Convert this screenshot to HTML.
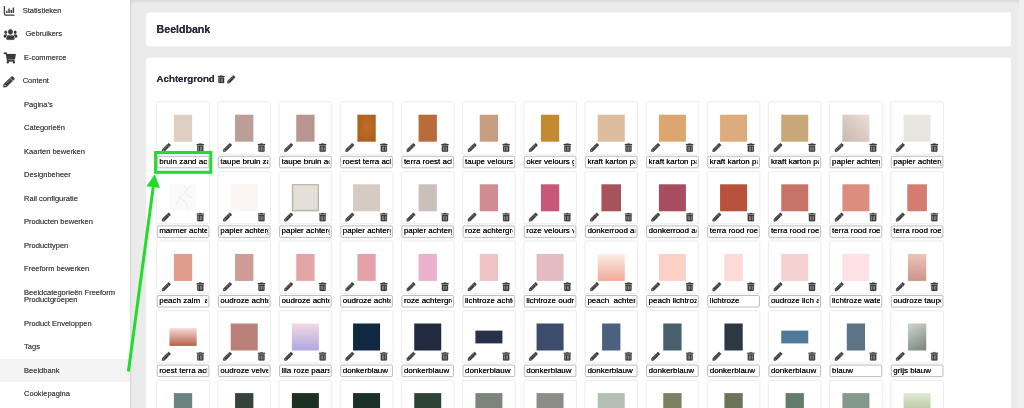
<!DOCTYPE html>
<html lang="nl"><head><meta charset="utf-8"><title>Beeldbank</title>
<style>
html,body{margin:0;padding:0}
body{width:1024px;height:408px;overflow:hidden;position:relative;background:#ebebeb;font-family:"Liberation Sans",sans-serif;}
.abs,.inp,.nav,.panel{position:absolute}
.topshade{left:0;top:0;width:1024px;height:4px;background:linear-gradient(#d9d9d9,#ebebeb)}
.scroll{left:1019px;top:0;width:5px;height:408px;background:#efefef}
.side{left:0;top:0;width:129.5px;height:408px;background:#fff;box-shadow:1px 0 2px rgba(0,0,0,.10)}
.nav{font-size:7.5px;line-height:7.5px;color:#4f4f4f;white-space:nowrap}
.active{left:0;top:358.5px;width:129.5px;height:23.5px;background:#f3f3f3}
.panel{background:#fff;border-radius:2px}
.h1{font-weight:bold;font-size:10.6px;line-height:12px;color:#2b2b3f;white-space:nowrap}
.h2{font-weight:bold;font-size:9.7px;line-height:11px;color:#2b2b3f;white-space:nowrap}
.inp{width:60px;height:10.2px;font-size:8px;line-height:10.2px;color:#111;white-space:pre;overflow:hidden;clip-path:inset(0 12.1px 0 0)}
.txt{text-shadow:0 0 .45px currentColor;position:absolute;left:0;top:0;width:1024px;height:408px;will-change:transform}
</style></head><body>
<div class="abs topshade"></div>
<div class="abs scroll"></div>

<svg class="abs" style="left:0;top:0" width="1024" height="408" viewBox="0 0 1024 408"><rect x="146.2" y="12.5" width="864.7" height="33.8" rx="2" fill="#fff"/><rect x="146.2" y="57.7" width="864.7" height="360" rx="2" fill="#fff"/></svg>
<div class="abs side"></div><div class="abs active"></div>
<svg class="abs" style="left:0;top:0" width="1024" height="408" viewBox="0 0 1024 408"><defs><radialGradient id="g1" cx="0.5" cy="0.45" r="0.72"><stop offset="0.0" stop-color="#bf6f28"/><stop offset="1.0" stop-color="#a95b1c"/></radialGradient><linearGradient id="g2" x1="1" y1="0" x2="0" y2="1"><stop offset="0" stop-color="#eadfd8"/><stop offset="1" stop-color="#c8b7ae"/></linearGradient><linearGradient id="g3" x1="0" y1="0" x2="0" y2="1"><stop offset="0" stop-color="#fdeee8"/><stop offset="1" stop-color="#f0a898"/></linearGradient><linearGradient id="g4" x1="0" y1="0" x2="0" y2="1"><stop offset="0" stop-color="#ecc4bc"/><stop offset="1" stop-color="#cc9488"/></linearGradient><linearGradient id="g5" x1="0" y1="0" x2="0" y2="1"><stop offset="0" stop-color="#f6dcd8"/><stop offset="1" stop-color="#b86048"/></linearGradient><linearGradient id="g6" x1="0" y1="0" x2="0" y2="1"><stop offset="0" stop-color="#f4d8e0"/><stop offset="1" stop-color="#b0a8e4"/></linearGradient><linearGradient id="g7" x1="0.3" y1="0" x2="0.7" y2="1"><stop offset="0" stop-color="#c8d0c8"/><stop offset="1" stop-color="#808884"/></linearGradient><linearGradient id="g8" x1="0" y1="0" x2="0" y2="1"><stop offset="0" stop-color="#e0e8d4"/><stop offset="1" stop-color="#a0b884"/></linearGradient></defs>
<rect x="156.70" y="101.80" width="52.70" height="52.40" rx="1.3" fill="#fff" stroke="#e4e4e4" stroke-width="0.7"/>
<rect x="173.90" y="114.70" width="18.3" height="27" fill="#dfcfc2"/>
<path transform="translate(162.10 143.40) scale(0.01621 0.01621)" fill="#3c3c3c" stroke="#3c3c3c" stroke-width="34" stroke-linejoin="round" d="M497.9 142.1l-46.1 46.1c-4.7 4.7-12.3 4.7-17 0l-111-111c-4.7-4.7-4.7-12.3 0-17l46.1-46.1c18.700-18.700 49.100-18.700 67.900 0l60.100 60.100c18.800 18.700 18.800 49.100 0 67.900zM284.200 99.800L21.600 362.400.400 483.900c-2.900 16.400 11.400 30.600 27.800 27.800l121.500-21.300 262.600-262.600c4.700-4.700 4.700-12.300 0-17l-111-111c-4.800-4.700-12.400-4.700-17.100 0zM124.100 339.900c-5.500-5.500-5.500-14.300 0-19.800l154-154c5.500-5.500 14.300-5.500 19.800 0s5.500 14.300 0 19.800l-154 154c-5.500 5.500-14.300 5.500-19.800 0zM88 424h48v36.300l-64.500 11.300-31.100-31.100L51.700 376H88v48z"/>
<path transform="translate(196.70 143.40) scale(0.01607 0.01621)" fill="#3c3c3c" stroke="#3c3c3c" stroke-width="14" stroke-linejoin="round" d="M32 464a48 48 0 0 0 48 48h288a48 48 0 0 0 48-48V128H32zm272-256a16 16 0 0 1 32 0v224a16 16 0 0 1-32 0zm-96 0a16 16 0 0 1 32 0v224a16 16 0 0 1-32 0zm-96 0a16 16 0 0 1 32 0v224a16 16 0 0 1-32 0zM432 32H312l-9.400-18.700A24 24 0 0 0 281.100 0H166.800a23.720 23.720 0 0 0-21.400 13.300L136 32H16A16 16 0 0 0 0 48v32a16 16 0 0 0 16 16h416a16 16 0 0 0 16-16V48a16 16 0 0 0-16-16z"/>
<rect x="157.20" y="156.30" width="51.7" height="11.5" rx="1.1" fill="#fff" stroke="#939393" stroke-width="0.62"/>
<rect x="217.87" y="101.80" width="52.70" height="52.40" rx="1.3" fill="#fff" stroke="#e4e4e4" stroke-width="0.7"/>
<rect x="235.07" y="114.70" width="18.3" height="27" fill="#bd9d97"/>
<path transform="translate(223.27 143.40) scale(0.01621 0.01621)" fill="#3c3c3c" stroke="#3c3c3c" stroke-width="34" stroke-linejoin="round" d="M497.9 142.1l-46.1 46.1c-4.7 4.7-12.3 4.7-17 0l-111-111c-4.7-4.7-4.7-12.3 0-17l46.1-46.1c18.700-18.700 49.100-18.700 67.900 0l60.100 60.100c18.800 18.700 18.800 49.100 0 67.900zM284.200 99.800L21.600 362.400.400 483.900c-2.900 16.400 11.400 30.600 27.800 27.800l121.500-21.300 262.600-262.600c4.700-4.700 4.700-12.300 0-17l-111-111c-4.800-4.700-12.400-4.700-17.100 0zM124.100 339.900c-5.500-5.500-5.500-14.300 0-19.800l154-154c5.500-5.500 14.300-5.500 19.800 0s5.500 14.300 0 19.800l-154 154c-5.500 5.500-14.300 5.500-19.800 0zM88 424h48v36.300l-64.500 11.300-31.100-31.100L51.700 376H88v48z"/>
<path transform="translate(257.87 143.40) scale(0.01607 0.01621)" fill="#3c3c3c" stroke="#3c3c3c" stroke-width="14" stroke-linejoin="round" d="M32 464a48 48 0 0 0 48 48h288a48 48 0 0 0 48-48V128H32zm272-256a16 16 0 0 1 32 0v224a16 16 0 0 1-32 0zm-96 0a16 16 0 0 1 32 0v224a16 16 0 0 1-32 0zm-96 0a16 16 0 0 1 32 0v224a16 16 0 0 1-32 0zM432 32H312l-9.400-18.700A24 24 0 0 0 281.100 0H166.800a23.720 23.720 0 0 0-21.400 13.300L136 32H16A16 16 0 0 0 0 48v32a16 16 0 0 0 16 16h416a16 16 0 0 0 16-16V48a16 16 0 0 0-16-16z"/>
<rect x="218.37" y="156.30" width="51.7" height="11.5" rx="1.1" fill="#fff" stroke="#939393" stroke-width="0.62"/>
<rect x="279.04" y="101.80" width="52.70" height="52.40" rx="1.3" fill="#fff" stroke="#e4e4e4" stroke-width="0.7"/>
<rect x="296.24" y="114.70" width="18.3" height="27" fill="#b8958f"/>
<path transform="translate(284.44 143.40) scale(0.01621 0.01621)" fill="#3c3c3c" stroke="#3c3c3c" stroke-width="34" stroke-linejoin="round" d="M497.9 142.1l-46.1 46.1c-4.7 4.7-12.3 4.7-17 0l-111-111c-4.7-4.7-4.7-12.3 0-17l46.1-46.1c18.700-18.700 49.100-18.700 67.900 0l60.100 60.100c18.800 18.700 18.800 49.100 0 67.900zM284.200 99.800L21.600 362.400.400 483.900c-2.900 16.400 11.400 30.600 27.800 27.800l121.500-21.300 262.600-262.600c4.700-4.700 4.700-12.300 0-17l-111-111c-4.800-4.700-12.400-4.700-17.100 0zM124.100 339.900c-5.500-5.500-5.500-14.300 0-19.800l154-154c5.500-5.500 14.300-5.500 19.800 0s5.500 14.300 0 19.800l-154 154c-5.500 5.500-14.300 5.500-19.800 0zM88 424h48v36.300l-64.500 11.300-31.100-31.100L51.700 376H88v48z"/>
<path transform="translate(319.04 143.40) scale(0.01607 0.01621)" fill="#3c3c3c" stroke="#3c3c3c" stroke-width="14" stroke-linejoin="round" d="M32 464a48 48 0 0 0 48 48h288a48 48 0 0 0 48-48V128H32zm272-256a16 16 0 0 1 32 0v224a16 16 0 0 1-32 0zm-96 0a16 16 0 0 1 32 0v224a16 16 0 0 1-32 0zm-96 0a16 16 0 0 1 32 0v224a16 16 0 0 1-32 0zM432 32H312l-9.400-18.700A24 24 0 0 0 281.100 0H166.800a23.720 23.720 0 0 0-21.400 13.300L136 32H16A16 16 0 0 0 0 48v32a16 16 0 0 0 16 16h416a16 16 0 0 0 16-16V48a16 16 0 0 0-16-16z"/>
<rect x="279.54" y="156.30" width="51.7" height="11.5" rx="1.1" fill="#fff" stroke="#939393" stroke-width="0.62"/>
<rect x="340.21" y="101.80" width="52.70" height="52.40" rx="1.3" fill="#fff" stroke="#e4e4e4" stroke-width="0.7"/>
<rect x="357.41" y="114.70" width="18.3" height="27" fill="url(#g1)"/>
<path transform="translate(345.61 143.40) scale(0.01621 0.01621)" fill="#3c3c3c" stroke="#3c3c3c" stroke-width="34" stroke-linejoin="round" d="M497.9 142.1l-46.1 46.1c-4.7 4.7-12.3 4.7-17 0l-111-111c-4.7-4.7-4.7-12.3 0-17l46.1-46.1c18.700-18.700 49.100-18.700 67.900 0l60.100 60.100c18.800 18.700 18.800 49.100 0 67.900zM284.200 99.800L21.600 362.400.400 483.900c-2.900 16.400 11.400 30.600 27.800 27.800l121.500-21.300 262.600-262.600c4.700-4.700 4.700-12.300 0-17l-111-111c-4.800-4.700-12.400-4.700-17.100 0zM124.100 339.900c-5.500-5.500-5.500-14.300 0-19.800l154-154c5.500-5.500 14.300-5.500 19.800 0s5.500 14.300 0 19.800l-154 154c-5.500 5.500-14.300 5.500-19.800 0zM88 424h48v36.300l-64.500 11.300-31.100-31.100L51.700 376H88v48z"/>
<path transform="translate(380.21 143.40) scale(0.01607 0.01621)" fill="#3c3c3c" stroke="#3c3c3c" stroke-width="14" stroke-linejoin="round" d="M32 464a48 48 0 0 0 48 48h288a48 48 0 0 0 48-48V128H32zm272-256a16 16 0 0 1 32 0v224a16 16 0 0 1-32 0zm-96 0a16 16 0 0 1 32 0v224a16 16 0 0 1-32 0zm-96 0a16 16 0 0 1 32 0v224a16 16 0 0 1-32 0zM432 32H312l-9.400-18.700A24 24 0 0 0 281.100 0H166.800a23.720 23.720 0 0 0-21.400 13.300L136 32H16A16 16 0 0 0 0 48v32a16 16 0 0 0 16 16h416a16 16 0 0 0 16-16V48a16 16 0 0 0-16-16z"/>
<rect x="340.71" y="156.30" width="51.7" height="11.5" rx="1.1" fill="#fff" stroke="#939393" stroke-width="0.62"/>
<rect x="401.38" y="101.80" width="52.70" height="52.40" rx="1.3" fill="#fff" stroke="#e4e4e4" stroke-width="0.7"/>
<rect x="418.58" y="114.70" width="18.3" height="27" fill="#b96b3a"/>
<path transform="translate(406.78 143.40) scale(0.01621 0.01621)" fill="#3c3c3c" stroke="#3c3c3c" stroke-width="34" stroke-linejoin="round" d="M497.9 142.1l-46.1 46.1c-4.7 4.7-12.3 4.7-17 0l-111-111c-4.7-4.7-4.7-12.3 0-17l46.1-46.1c18.700-18.700 49.100-18.700 67.900 0l60.100 60.100c18.800 18.700 18.800 49.100 0 67.900zM284.200 99.800L21.600 362.400.400 483.900c-2.900 16.400 11.400 30.600 27.800 27.800l121.500-21.300 262.600-262.600c4.700-4.700 4.700-12.300 0-17l-111-111c-4.800-4.700-12.400-4.700-17.100 0zM124.100 339.900c-5.500-5.500-5.500-14.300 0-19.800l154-154c5.500-5.500 14.300-5.500 19.800 0s5.500 14.300 0 19.800l-154 154c-5.500 5.500-14.300 5.500-19.800 0zM88 424h48v36.300l-64.500 11.300-31.100-31.100L51.700 376H88v48z"/>
<path transform="translate(441.38 143.40) scale(0.01607 0.01621)" fill="#3c3c3c" stroke="#3c3c3c" stroke-width="14" stroke-linejoin="round" d="M32 464a48 48 0 0 0 48 48h288a48 48 0 0 0 48-48V128H32zm272-256a16 16 0 0 1 32 0v224a16 16 0 0 1-32 0zm-96 0a16 16 0 0 1 32 0v224a16 16 0 0 1-32 0zm-96 0a16 16 0 0 1 32 0v224a16 16 0 0 1-32 0zM432 32H312l-9.400-18.700A24 24 0 0 0 281.100 0H166.800a23.720 23.720 0 0 0-21.400 13.300L136 32H16A16 16 0 0 0 0 48v32a16 16 0 0 0 16 16h416a16 16 0 0 0 16-16V48a16 16 0 0 0-16-16z"/>
<rect x="401.88" y="156.30" width="51.7" height="11.5" rx="1.1" fill="#fff" stroke="#939393" stroke-width="0.62"/>
<rect x="462.55" y="101.80" width="52.70" height="52.40" rx="1.3" fill="#fff" stroke="#e4e4e4" stroke-width="0.7"/>
<rect x="479.75" y="114.70" width="18.3" height="27" fill="#c89e80"/>
<path transform="translate(467.95 143.40) scale(0.01621 0.01621)" fill="#3c3c3c" stroke="#3c3c3c" stroke-width="34" stroke-linejoin="round" d="M497.9 142.1l-46.1 46.1c-4.7 4.7-12.3 4.7-17 0l-111-111c-4.7-4.7-4.7-12.3 0-17l46.1-46.1c18.700-18.700 49.100-18.700 67.900 0l60.100 60.100c18.800 18.700 18.800 49.100 0 67.900zM284.200 99.800L21.600 362.400.400 483.900c-2.900 16.400 11.400 30.600 27.800 27.800l121.500-21.300 262.600-262.600c4.700-4.700 4.700-12.300 0-17l-111-111c-4.800-4.700-12.400-4.700-17.100 0zM124.100 339.900c-5.500-5.500-5.500-14.300 0-19.800l154-154c5.500-5.500 14.300-5.500 19.800 0s5.500 14.300 0 19.800l-154 154c-5.500 5.500-14.300 5.500-19.800 0zM88 424h48v36.300l-64.500 11.300-31.100-31.100L51.700 376H88v48z"/>
<path transform="translate(502.55 143.40) scale(0.01607 0.01621)" fill="#3c3c3c" stroke="#3c3c3c" stroke-width="14" stroke-linejoin="round" d="M32 464a48 48 0 0 0 48 48h288a48 48 0 0 0 48-48V128H32zm272-256a16 16 0 0 1 32 0v224a16 16 0 0 1-32 0zm-96 0a16 16 0 0 1 32 0v224a16 16 0 0 1-32 0zm-96 0a16 16 0 0 1 32 0v224a16 16 0 0 1-32 0zM432 32H312l-9.400-18.700A24 24 0 0 0 281.100 0H166.800a23.720 23.720 0 0 0-21.400 13.300L136 32H16A16 16 0 0 0 0 48v32a16 16 0 0 0 16 16h416a16 16 0 0 0 16-16V48a16 16 0 0 0-16-16z"/>
<rect x="463.05" y="156.30" width="51.7" height="11.5" rx="1.1" fill="#fff" stroke="#939393" stroke-width="0.62"/>
<rect x="523.72" y="101.80" width="52.70" height="52.40" rx="1.3" fill="#fff" stroke="#e4e4e4" stroke-width="0.7"/>
<rect x="540.92" y="114.70" width="18.3" height="27" fill="#c48a30"/>
<path transform="translate(529.12 143.40) scale(0.01621 0.01621)" fill="#3c3c3c" stroke="#3c3c3c" stroke-width="34" stroke-linejoin="round" d="M497.9 142.1l-46.1 46.1c-4.7 4.7-12.3 4.7-17 0l-111-111c-4.7-4.7-4.7-12.3 0-17l46.1-46.1c18.700-18.700 49.100-18.700 67.900 0l60.100 60.100c18.800 18.700 18.800 49.100 0 67.900zM284.200 99.800L21.600 362.400.400 483.900c-2.900 16.400 11.400 30.600 27.800 27.800l121.500-21.300 262.600-262.600c4.700-4.700 4.700-12.300 0-17l-111-111c-4.800-4.700-12.400-4.700-17.100 0zM124.100 339.900c-5.500-5.500-5.500-14.300 0-19.800l154-154c5.500-5.500 14.300-5.500 19.800 0s5.500 14.300 0 19.800l-154 154c-5.500 5.500-14.300 5.500-19.800 0zM88 424h48v36.300l-64.500 11.300-31.100-31.100L51.700 376H88v48z"/>
<path transform="translate(563.72 143.40) scale(0.01607 0.01621)" fill="#3c3c3c" stroke="#3c3c3c" stroke-width="14" stroke-linejoin="round" d="M32 464a48 48 0 0 0 48 48h288a48 48 0 0 0 48-48V128H32zm272-256a16 16 0 0 1 32 0v224a16 16 0 0 1-32 0zm-96 0a16 16 0 0 1 32 0v224a16 16 0 0 1-32 0zm-96 0a16 16 0 0 1 32 0v224a16 16 0 0 1-32 0zM432 32H312l-9.400-18.700A24 24 0 0 0 281.100 0H166.800a23.720 23.720 0 0 0-21.400 13.300L136 32H16A16 16 0 0 0 0 48v32a16 16 0 0 0 16 16h416a16 16 0 0 0 16-16V48a16 16 0 0 0-16-16z"/>
<rect x="524.22" y="156.30" width="51.7" height="11.5" rx="1.1" fill="#fff" stroke="#939393" stroke-width="0.62"/>
<rect x="584.89" y="101.80" width="52.70" height="52.40" rx="1.3" fill="#fff" stroke="#e4e4e4" stroke-width="0.7"/>
<rect x="597.74" y="114.70" width="27" height="27" fill="#dcbc9c"/>
<path transform="translate(590.29 143.40) scale(0.01621 0.01621)" fill="#3c3c3c" stroke="#3c3c3c" stroke-width="34" stroke-linejoin="round" d="M497.9 142.1l-46.1 46.1c-4.7 4.7-12.3 4.7-17 0l-111-111c-4.7-4.7-4.7-12.3 0-17l46.1-46.1c18.700-18.700 49.100-18.700 67.900 0l60.100 60.100c18.800 18.700 18.800 49.100 0 67.900zM284.200 99.800L21.600 362.400.400 483.900c-2.900 16.400 11.400 30.600 27.800 27.800l121.500-21.300 262.600-262.600c4.700-4.700 4.700-12.300 0-17l-111-111c-4.800-4.700-12.400-4.700-17.100 0zM124.100 339.900c-5.500-5.500-5.500-14.300 0-19.800l154-154c5.500-5.500 14.300-5.500 19.800 0s5.500 14.300 0 19.800l-154 154c-5.500 5.500-14.300 5.500-19.800 0zM88 424h48v36.300l-64.500 11.300-31.100-31.100L51.700 376H88v48z"/>
<path transform="translate(624.89 143.40) scale(0.01607 0.01621)" fill="#3c3c3c" stroke="#3c3c3c" stroke-width="14" stroke-linejoin="round" d="M32 464a48 48 0 0 0 48 48h288a48 48 0 0 0 48-48V128H32zm272-256a16 16 0 0 1 32 0v224a16 16 0 0 1-32 0zm-96 0a16 16 0 0 1 32 0v224a16 16 0 0 1-32 0zm-96 0a16 16 0 0 1 32 0v224a16 16 0 0 1-32 0zM432 32H312l-9.400-18.700A24 24 0 0 0 281.100 0H166.800a23.720 23.720 0 0 0-21.400 13.300L136 32H16A16 16 0 0 0 0 48v32a16 16 0 0 0 16 16h416a16 16 0 0 0 16-16V48a16 16 0 0 0-16-16z"/>
<rect x="585.39" y="156.30" width="51.7" height="11.5" rx="1.1" fill="#fff" stroke="#939393" stroke-width="0.62"/>
<rect x="646.06" y="101.80" width="52.70" height="52.40" rx="1.3" fill="#fff" stroke="#e4e4e4" stroke-width="0.7"/>
<rect x="658.91" y="114.70" width="27" height="27" fill="#dca671"/>
<path transform="translate(651.46 143.40) scale(0.01621 0.01621)" fill="#3c3c3c" stroke="#3c3c3c" stroke-width="34" stroke-linejoin="round" d="M497.9 142.1l-46.1 46.1c-4.7 4.7-12.3 4.7-17 0l-111-111c-4.7-4.7-4.7-12.3 0-17l46.1-46.1c18.700-18.700 49.100-18.700 67.900 0l60.100 60.100c18.800 18.700 18.800 49.100 0 67.900zM284.200 99.800L21.600 362.400.400 483.900c-2.900 16.400 11.400 30.600 27.800 27.800l121.500-21.300 262.600-262.600c4.700-4.700 4.700-12.300 0-17l-111-111c-4.800-4.700-12.400-4.700-17.100 0zM124.100 339.900c-5.500-5.500-5.500-14.300 0-19.800l154-154c5.500-5.500 14.300-5.500 19.800 0s5.500 14.300 0 19.800l-154 154c-5.500 5.500-14.300 5.500-19.800 0zM88 424h48v36.300l-64.500 11.300-31.100-31.100L51.700 376H88v48z"/>
<path transform="translate(686.06 143.40) scale(0.01607 0.01621)" fill="#3c3c3c" stroke="#3c3c3c" stroke-width="14" stroke-linejoin="round" d="M32 464a48 48 0 0 0 48 48h288a48 48 0 0 0 48-48V128H32zm272-256a16 16 0 0 1 32 0v224a16 16 0 0 1-32 0zm-96 0a16 16 0 0 1 32 0v224a16 16 0 0 1-32 0zm-96 0a16 16 0 0 1 32 0v224a16 16 0 0 1-32 0zM432 32H312l-9.400-18.700A24 24 0 0 0 281.100 0H166.800a23.720 23.720 0 0 0-21.400 13.300L136 32H16A16 16 0 0 0 0 48v32a16 16 0 0 0 16 16h416a16 16 0 0 0 16-16V48a16 16 0 0 0-16-16z"/>
<rect x="646.56" y="156.30" width="51.7" height="11.5" rx="1.1" fill="#fff" stroke="#939393" stroke-width="0.62"/>
<rect x="707.23" y="101.80" width="52.70" height="52.40" rx="1.3" fill="#fff" stroke="#e4e4e4" stroke-width="0.7"/>
<rect x="720.08" y="114.70" width="27" height="27" fill="#dcac7c"/>
<path transform="translate(712.63 143.40) scale(0.01621 0.01621)" fill="#3c3c3c" stroke="#3c3c3c" stroke-width="34" stroke-linejoin="round" d="M497.9 142.1l-46.1 46.1c-4.7 4.7-12.3 4.7-17 0l-111-111c-4.7-4.7-4.7-12.3 0-17l46.1-46.1c18.700-18.700 49.100-18.700 67.900 0l60.100 60.100c18.800 18.700 18.800 49.100 0 67.900zM284.200 99.800L21.600 362.400.400 483.900c-2.900 16.400 11.400 30.600 27.800 27.800l121.500-21.300 262.600-262.600c4.700-4.700 4.700-12.300 0-17l-111-111c-4.800-4.700-12.400-4.700-17.100 0zM124.100 339.900c-5.500-5.500-5.500-14.300 0-19.800l154-154c5.500-5.500 14.300-5.500 19.800 0s5.500 14.300 0 19.800l-154 154c-5.500 5.500-14.300 5.500-19.800 0zM88 424h48v36.300l-64.500 11.300-31.100-31.100L51.700 376H88v48z"/>
<path transform="translate(747.23 143.40) scale(0.01607 0.01621)" fill="#3c3c3c" stroke="#3c3c3c" stroke-width="14" stroke-linejoin="round" d="M32 464a48 48 0 0 0 48 48h288a48 48 0 0 0 48-48V128H32zm272-256a16 16 0 0 1 32 0v224a16 16 0 0 1-32 0zm-96 0a16 16 0 0 1 32 0v224a16 16 0 0 1-32 0zm-96 0a16 16 0 0 1 32 0v224a16 16 0 0 1-32 0zM432 32H312l-9.400-18.700A24 24 0 0 0 281.100 0H166.800a23.720 23.720 0 0 0-21.400 13.300L136 32H16A16 16 0 0 0 0 48v32a16 16 0 0 0 16 16h416a16 16 0 0 0 16-16V48a16 16 0 0 0-16-16z"/>
<rect x="707.73" y="156.30" width="51.7" height="11.5" rx="1.1" fill="#fff" stroke="#939393" stroke-width="0.62"/>
<rect x="768.40" y="101.80" width="52.70" height="52.40" rx="1.3" fill="#fff" stroke="#e4e4e4" stroke-width="0.7"/>
<rect x="781.25" y="114.70" width="27" height="27" fill="#c8a878"/>
<path transform="translate(773.80 143.40) scale(0.01621 0.01621)" fill="#3c3c3c" stroke="#3c3c3c" stroke-width="34" stroke-linejoin="round" d="M497.9 142.1l-46.1 46.1c-4.7 4.7-12.3 4.7-17 0l-111-111c-4.7-4.7-4.7-12.3 0-17l46.1-46.1c18.700-18.700 49.100-18.700 67.900 0l60.100 60.100c18.800 18.700 18.800 49.100 0 67.900zM284.200 99.800L21.600 362.400.400 483.900c-2.900 16.400 11.400 30.600 27.800 27.800l121.500-21.300 262.600-262.600c4.700-4.700 4.700-12.300 0-17l-111-111c-4.800-4.700-12.400-4.700-17.100 0zM124.100 339.900c-5.500-5.500-5.500-14.300 0-19.800l154-154c5.500-5.500 14.300-5.500 19.800 0s5.500 14.300 0 19.800l-154 154c-5.500 5.500-14.300 5.500-19.800 0zM88 424h48v36.300l-64.500 11.300-31.100-31.100L51.700 376H88v48z"/>
<path transform="translate(808.40 143.40) scale(0.01607 0.01621)" fill="#3c3c3c" stroke="#3c3c3c" stroke-width="14" stroke-linejoin="round" d="M32 464a48 48 0 0 0 48 48h288a48 48 0 0 0 48-48V128H32zm272-256a16 16 0 0 1 32 0v224a16 16 0 0 1-32 0zm-96 0a16 16 0 0 1 32 0v224a16 16 0 0 1-32 0zm-96 0a16 16 0 0 1 32 0v224a16 16 0 0 1-32 0zM432 32H312l-9.400-18.700A24 24 0 0 0 281.100 0H166.800a23.720 23.720 0 0 0-21.400 13.300L136 32H16A16 16 0 0 0 0 48v32a16 16 0 0 0 16 16h416a16 16 0 0 0 16-16V48a16 16 0 0 0-16-16z"/>
<rect x="768.90" y="156.30" width="51.7" height="11.5" rx="1.1" fill="#fff" stroke="#939393" stroke-width="0.62"/>
<rect x="829.57" y="101.80" width="52.70" height="52.40" rx="1.3" fill="#fff" stroke="#e4e4e4" stroke-width="0.7"/>
<rect x="842.42" y="114.70" width="27" height="27" fill="url(#g2)"/>
<path transform="translate(834.97 143.40) scale(0.01621 0.01621)" fill="#3c3c3c" stroke="#3c3c3c" stroke-width="34" stroke-linejoin="round" d="M497.9 142.1l-46.1 46.1c-4.7 4.7-12.3 4.7-17 0l-111-111c-4.7-4.7-4.7-12.3 0-17l46.1-46.1c18.700-18.700 49.100-18.700 67.900 0l60.100 60.100c18.800 18.700 18.800 49.100 0 67.900zM284.200 99.800L21.600 362.400.400 483.900c-2.900 16.400 11.400 30.600 27.800 27.800l121.500-21.300 262.600-262.600c4.700-4.700 4.700-12.300 0-17l-111-111c-4.800-4.700-12.400-4.700-17.100 0zM124.100 339.900c-5.500-5.500-5.500-14.300 0-19.800l154-154c5.500-5.500 14.300-5.500 19.800 0s5.500 14.300 0 19.800l-154 154c-5.500 5.500-14.300 5.500-19.800 0zM88 424h48v36.300l-64.500 11.300-31.100-31.100L51.700 376H88v48z"/>
<path transform="translate(869.57 143.40) scale(0.01607 0.01621)" fill="#3c3c3c" stroke="#3c3c3c" stroke-width="14" stroke-linejoin="round" d="M32 464a48 48 0 0 0 48 48h288a48 48 0 0 0 48-48V128H32zm272-256a16 16 0 0 1 32 0v224a16 16 0 0 1-32 0zm-96 0a16 16 0 0 1 32 0v224a16 16 0 0 1-32 0zm-96 0a16 16 0 0 1 32 0v224a16 16 0 0 1-32 0zM432 32H312l-9.400-18.700A24 24 0 0 0 281.100 0H166.800a23.720 23.720 0 0 0-21.400 13.300L136 32H16A16 16 0 0 0 0 48v32a16 16 0 0 0 16 16h416a16 16 0 0 0 16-16V48a16 16 0 0 0-16-16z"/>
<rect x="830.07" y="156.30" width="51.7" height="11.5" rx="1.1" fill="#fff" stroke="#939393" stroke-width="0.62"/>
<rect x="890.74" y="101.80" width="52.70" height="52.40" rx="1.3" fill="#fff" stroke="#e4e4e4" stroke-width="0.7"/>
<rect x="903.59" y="114.70" width="27" height="27" fill="#e8e6e0"/>
<path transform="translate(896.14 143.40) scale(0.01621 0.01621)" fill="#3c3c3c" stroke="#3c3c3c" stroke-width="34" stroke-linejoin="round" d="M497.9 142.1l-46.1 46.1c-4.7 4.7-12.3 4.7-17 0l-111-111c-4.7-4.7-4.7-12.3 0-17l46.1-46.1c18.700-18.700 49.100-18.700 67.900 0l60.100 60.100c18.800 18.700 18.800 49.100 0 67.900zM284.200 99.800L21.600 362.400.400 483.900c-2.900 16.400 11.400 30.600 27.800 27.800l121.500-21.300 262.600-262.600c4.700-4.700 4.700-12.300 0-17l-111-111c-4.800-4.700-12.400-4.700-17.100 0zM124.100 339.900c-5.500-5.500-5.500-14.300 0-19.800l154-154c5.500-5.500 14.300-5.500 19.800 0s5.500 14.300 0 19.800l-154 154c-5.500 5.500-14.300 5.500-19.800 0zM88 424h48v36.300l-64.500 11.300-31.100-31.100L51.700 376H88v48z"/>
<path transform="translate(930.74 143.40) scale(0.01607 0.01621)" fill="#3c3c3c" stroke="#3c3c3c" stroke-width="14" stroke-linejoin="round" d="M32 464a48 48 0 0 0 48 48h288a48 48 0 0 0 48-48V128H32zm272-256a16 16 0 0 1 32 0v224a16 16 0 0 1-32 0zm-96 0a16 16 0 0 1 32 0v224a16 16 0 0 1-32 0zm-96 0a16 16 0 0 1 32 0v224a16 16 0 0 1-32 0zM432 32H312l-9.400-18.700A24 24 0 0 0 281.100 0H166.800a23.720 23.720 0 0 0-21.400 13.300L136 32H16A16 16 0 0 0 0 48v32a16 16 0 0 0 16 16h416a16 16 0 0 0 16-16V48a16 16 0 0 0-16-16z"/>
<rect x="891.24" y="156.30" width="51.7" height="11.5" rx="1.1" fill="#fff" stroke="#939393" stroke-width="0.62"/>
<rect x="156.70" y="171.40" width="52.70" height="52.40" rx="1.3" fill="#fff" stroke="#e4e4e4" stroke-width="0.7"/>
<rect x="169.55" y="184.30" width="27" height="27" fill="#fafafa"/>
<path transform="translate(162.10 213.00) scale(0.01621 0.01621)" fill="#3c3c3c" stroke="#3c3c3c" stroke-width="34" stroke-linejoin="round" d="M497.9 142.1l-46.1 46.1c-4.7 4.7-12.3 4.7-17 0l-111-111c-4.7-4.7-4.7-12.3 0-17l46.1-46.1c18.700-18.700 49.100-18.700 67.900 0l60.100 60.100c18.800 18.700 18.800 49.100 0 67.900zM284.200 99.800L21.600 362.400.400 483.900c-2.900 16.400 11.400 30.600 27.800 27.800l121.500-21.300 262.600-262.600c4.700-4.700 4.700-12.300 0-17l-111-111c-4.800-4.700-12.400-4.700-17.100 0zM124.100 339.900c-5.500-5.500-5.500-14.300 0-19.800l154-154c5.500-5.500 14.300-5.500 19.800 0s5.500 14.300 0 19.800l-154 154c-5.500 5.500-14.300 5.500-19.800 0zM88 424h48v36.300l-64.500 11.300-31.100-31.100L51.700 376H88v48z"/>
<path transform="translate(196.70 213.00) scale(0.01607 0.01621)" fill="#3c3c3c" stroke="#3c3c3c" stroke-width="14" stroke-linejoin="round" d="M32 464a48 48 0 0 0 48 48h288a48 48 0 0 0 48-48V128H32zm272-256a16 16 0 0 1 32 0v224a16 16 0 0 1-32 0zm-96 0a16 16 0 0 1 32 0v224a16 16 0 0 1-32 0zm-96 0a16 16 0 0 1 32 0v224a16 16 0 0 1-32 0zM432 32H312l-9.400-18.700A24 24 0 0 0 281.100 0H166.800a23.720 23.720 0 0 0-21.400 13.300L136 32H16A16 16 0 0 0 0 48v32a16 16 0 0 0 16 16h416a16 16 0 0 0 16-16V48a16 16 0 0 0-16-16z"/>
<rect x="157.20" y="225.90" width="51.7" height="11.5" rx="1.1" fill="#fff" stroke="#939393" stroke-width="0.62"/>
<rect x="217.87" y="171.40" width="52.70" height="52.40" rx="1.3" fill="#fff" stroke="#e4e4e4" stroke-width="0.7"/>
<rect x="230.72" y="184.30" width="27" height="27" fill="#fbf5f3"/>
<path transform="translate(223.27 213.00) scale(0.01621 0.01621)" fill="#3c3c3c" stroke="#3c3c3c" stroke-width="34" stroke-linejoin="round" d="M497.9 142.1l-46.1 46.1c-4.7 4.7-12.3 4.7-17 0l-111-111c-4.7-4.7-4.7-12.3 0-17l46.1-46.1c18.700-18.700 49.100-18.700 67.900 0l60.100 60.100c18.800 18.700 18.800 49.100 0 67.900zM284.200 99.800L21.600 362.400.400 483.900c-2.900 16.400 11.400 30.600 27.800 27.800l121.500-21.300 262.600-262.600c4.700-4.700 4.700-12.300 0-17l-111-111c-4.800-4.700-12.400-4.700-17.100 0zM124.100 339.900c-5.500-5.500-5.500-14.300 0-19.800l154-154c5.500-5.500 14.300-5.500 19.800 0s5.500 14.300 0 19.800l-154 154c-5.500 5.500-14.300 5.500-19.800 0zM88 424h48v36.300l-64.500 11.300-31.100-31.100L51.700 376H88v48z"/>
<path transform="translate(257.87 213.00) scale(0.01607 0.01621)" fill="#3c3c3c" stroke="#3c3c3c" stroke-width="14" stroke-linejoin="round" d="M32 464a48 48 0 0 0 48 48h288a48 48 0 0 0 48-48V128H32zm272-256a16 16 0 0 1 32 0v224a16 16 0 0 1-32 0zm-96 0a16 16 0 0 1 32 0v224a16 16 0 0 1-32 0zm-96 0a16 16 0 0 1 32 0v224a16 16 0 0 1-32 0zM432 32H312l-9.400-18.700A24 24 0 0 0 281.100 0H166.800a23.720 23.720 0 0 0-21.400 13.300L136 32H16A16 16 0 0 0 0 48v32a16 16 0 0 0 16 16h416a16 16 0 0 0 16-16V48a16 16 0 0 0-16-16z"/>
<rect x="218.37" y="225.90" width="51.7" height="11.5" rx="1.1" fill="#fff" stroke="#939393" stroke-width="0.62"/>
<rect x="279.04" y="171.40" width="52.70" height="52.40" rx="1.3" fill="#fff" stroke="#e4e4e4" stroke-width="0.7"/>
<rect x="291.89" y="184.30" width="27" height="27" fill="#a59d8a"/>
<rect x="292.59" y="185.00" width="25.6" height="25.5" fill="#d6d1c6"/>
<rect x="293.59" y="186.00" width="23.6" height="23.4" fill="#e4e0d8"/>
<path transform="translate(284.44 213.00) scale(0.01621 0.01621)" fill="#3c3c3c" stroke="#3c3c3c" stroke-width="34" stroke-linejoin="round" d="M497.9 142.1l-46.1 46.1c-4.7 4.7-12.3 4.7-17 0l-111-111c-4.7-4.7-4.7-12.3 0-17l46.1-46.1c18.700-18.700 49.100-18.700 67.900 0l60.100 60.100c18.800 18.700 18.800 49.100 0 67.900zM284.200 99.800L21.600 362.400.400 483.900c-2.900 16.400 11.400 30.600 27.800 27.800l121.500-21.300 262.600-262.600c4.700-4.700 4.700-12.300 0-17l-111-111c-4.800-4.700-12.400-4.700-17.100 0zM124.100 339.900c-5.500-5.500-5.500-14.300 0-19.800l154-154c5.500-5.500 14.300-5.500 19.800 0s5.500 14.300 0 19.800l-154 154c-5.500 5.500-14.300 5.500-19.800 0zM88 424h48v36.300l-64.500 11.300-31.100-31.100L51.700 376H88v48z"/>
<path transform="translate(319.04 213.00) scale(0.01607 0.01621)" fill="#3c3c3c" stroke="#3c3c3c" stroke-width="14" stroke-linejoin="round" d="M32 464a48 48 0 0 0 48 48h288a48 48 0 0 0 48-48V128H32zm272-256a16 16 0 0 1 32 0v224a16 16 0 0 1-32 0zm-96 0a16 16 0 0 1 32 0v224a16 16 0 0 1-32 0zm-96 0a16 16 0 0 1 32 0v224a16 16 0 0 1-32 0zM432 32H312l-9.400-18.700A24 24 0 0 0 281.100 0H166.800a23.720 23.720 0 0 0-21.400 13.300L136 32H16A16 16 0 0 0 0 48v32a16 16 0 0 0 16 16h416a16 16 0 0 0 16-16V48a16 16 0 0 0-16-16z"/>
<rect x="279.54" y="225.90" width="51.7" height="11.5" rx="1.1" fill="#fff" stroke="#939393" stroke-width="0.62"/>
<rect x="340.21" y="171.40" width="52.70" height="52.40" rx="1.3" fill="#fff" stroke="#e4e4e4" stroke-width="0.7"/>
<rect x="353.06" y="184.30" width="27" height="27" fill="#d6cbc2"/>
<path transform="translate(345.61 213.00) scale(0.01621 0.01621)" fill="#3c3c3c" stroke="#3c3c3c" stroke-width="34" stroke-linejoin="round" d="M497.9 142.1l-46.1 46.1c-4.7 4.7-12.3 4.7-17 0l-111-111c-4.7-4.7-4.7-12.3 0-17l46.1-46.1c18.700-18.700 49.100-18.700 67.900 0l60.100 60.100c18.800 18.700 18.800 49.100 0 67.900zM284.200 99.800L21.600 362.400.400 483.900c-2.900 16.400 11.400 30.600 27.800 27.800l121.500-21.300 262.600-262.600c4.700-4.700 4.700-12.300 0-17l-111-111c-4.800-4.700-12.400-4.700-17.100 0zM124.100 339.900c-5.500-5.500-5.500-14.300 0-19.800l154-154c5.500-5.500 14.300-5.500 19.800 0s5.500 14.300 0 19.800l-154 154c-5.500 5.500-14.300 5.500-19.800 0zM88 424h48v36.300l-64.500 11.300-31.100-31.100L51.700 376H88v48z"/>
<path transform="translate(380.21 213.00) scale(0.01607 0.01621)" fill="#3c3c3c" stroke="#3c3c3c" stroke-width="14" stroke-linejoin="round" d="M32 464a48 48 0 0 0 48 48h288a48 48 0 0 0 48-48V128H32zm272-256a16 16 0 0 1 32 0v224a16 16 0 0 1-32 0zm-96 0a16 16 0 0 1 32 0v224a16 16 0 0 1-32 0zm-96 0a16 16 0 0 1 32 0v224a16 16 0 0 1-32 0zM432 32H312l-9.400-18.700A24 24 0 0 0 281.100 0H166.800a23.720 23.720 0 0 0-21.400 13.300L136 32H16A16 16 0 0 0 0 48v32a16 16 0 0 0 16 16h416a16 16 0 0 0 16-16V48a16 16 0 0 0-16-16z"/>
<rect x="340.71" y="225.90" width="51.7" height="11.5" rx="1.1" fill="#fff" stroke="#939393" stroke-width="0.62"/>
<rect x="401.38" y="171.40" width="52.70" height="52.40" rx="1.3" fill="#fff" stroke="#e4e4e4" stroke-width="0.7"/>
<rect x="418.58" y="184.30" width="18.3" height="27" fill="#c9c0bc"/>
<path transform="translate(406.78 213.00) scale(0.01621 0.01621)" fill="#3c3c3c" stroke="#3c3c3c" stroke-width="34" stroke-linejoin="round" d="M497.9 142.1l-46.1 46.1c-4.7 4.7-12.3 4.7-17 0l-111-111c-4.7-4.7-4.7-12.3 0-17l46.1-46.1c18.700-18.700 49.100-18.700 67.900 0l60.100 60.100c18.800 18.700 18.800 49.100 0 67.900zM284.200 99.800L21.600 362.400.400 483.900c-2.900 16.400 11.400 30.600 27.800 27.800l121.500-21.300 262.600-262.600c4.700-4.700 4.700-12.300 0-17l-111-111c-4.800-4.700-12.400-4.700-17.100 0zM124.100 339.900c-5.500-5.500-5.500-14.300 0-19.800l154-154c5.500-5.500 14.300-5.500 19.800 0s5.500 14.300 0 19.800l-154 154c-5.500 5.500-14.300 5.500-19.800 0zM88 424h48v36.300l-64.500 11.300-31.100-31.100L51.700 376H88v48z"/>
<path transform="translate(441.38 213.00) scale(0.01607 0.01621)" fill="#3c3c3c" stroke="#3c3c3c" stroke-width="14" stroke-linejoin="round" d="M32 464a48 48 0 0 0 48 48h288a48 48 0 0 0 48-48V128H32zm272-256a16 16 0 0 1 32 0v224a16 16 0 0 1-32 0zm-96 0a16 16 0 0 1 32 0v224a16 16 0 0 1-32 0zm-96 0a16 16 0 0 1 32 0v224a16 16 0 0 1-32 0zM432 32H312l-9.400-18.700A24 24 0 0 0 281.100 0H166.800a23.720 23.720 0 0 0-21.400 13.300L136 32H16A16 16 0 0 0 0 48v32a16 16 0 0 0 16 16h416a16 16 0 0 0 16-16V48a16 16 0 0 0-16-16z"/>
<rect x="401.88" y="225.90" width="51.7" height="11.5" rx="1.1" fill="#fff" stroke="#939393" stroke-width="0.62"/>
<rect x="462.55" y="171.40" width="52.70" height="52.40" rx="1.3" fill="#fff" stroke="#e4e4e4" stroke-width="0.7"/>
<rect x="479.75" y="184.30" width="18.3" height="27" fill="#d08c90"/>
<path transform="translate(467.95 213.00) scale(0.01621 0.01621)" fill="#3c3c3c" stroke="#3c3c3c" stroke-width="34" stroke-linejoin="round" d="M497.9 142.1l-46.1 46.1c-4.7 4.7-12.3 4.7-17 0l-111-111c-4.7-4.7-4.7-12.3 0-17l46.1-46.1c18.700-18.700 49.100-18.700 67.900 0l60.100 60.100c18.800 18.700 18.800 49.100 0 67.900zM284.200 99.800L21.600 362.400.400 483.900c-2.900 16.400 11.400 30.600 27.800 27.800l121.500-21.300 262.600-262.600c4.700-4.700 4.700-12.300 0-17l-111-111c-4.800-4.700-12.400-4.700-17.100 0zM124.100 339.900c-5.500-5.500-5.500-14.300 0-19.800l154-154c5.500-5.500 14.300-5.500 19.800 0s5.500 14.300 0 19.800l-154 154c-5.500 5.500-14.300 5.500-19.800 0zM88 424h48v36.300l-64.500 11.300-31.100-31.100L51.700 376H88v48z"/>
<path transform="translate(502.55 213.00) scale(0.01607 0.01621)" fill="#3c3c3c" stroke="#3c3c3c" stroke-width="14" stroke-linejoin="round" d="M32 464a48 48 0 0 0 48 48h288a48 48 0 0 0 48-48V128H32zm272-256a16 16 0 0 1 32 0v224a16 16 0 0 1-32 0zm-96 0a16 16 0 0 1 32 0v224a16 16 0 0 1-32 0zm-96 0a16 16 0 0 1 32 0v224a16 16 0 0 1-32 0zM432 32H312l-9.400-18.700A24 24 0 0 0 281.100 0H166.800a23.720 23.720 0 0 0-21.400 13.300L136 32H16A16 16 0 0 0 0 48v32a16 16 0 0 0 16 16h416a16 16 0 0 0 16-16V48a16 16 0 0 0-16-16z"/>
<rect x="463.05" y="225.90" width="51.7" height="11.5" rx="1.1" fill="#fff" stroke="#939393" stroke-width="0.62"/>
<rect x="523.72" y="171.40" width="52.70" height="52.40" rx="1.3" fill="#fff" stroke="#e4e4e4" stroke-width="0.7"/>
<rect x="540.92" y="184.30" width="18.3" height="27" fill="#c8587a"/>
<path transform="translate(529.12 213.00) scale(0.01621 0.01621)" fill="#3c3c3c" stroke="#3c3c3c" stroke-width="34" stroke-linejoin="round" d="M497.9 142.1l-46.1 46.1c-4.7 4.7-12.3 4.7-17 0l-111-111c-4.7-4.7-4.7-12.3 0-17l46.1-46.1c18.700-18.700 49.100-18.700 67.900 0l60.100 60.100c18.800 18.700 18.800 49.100 0 67.900zM284.200 99.800L21.600 362.400.400 483.900c-2.900 16.400 11.400 30.600 27.800 27.800l121.500-21.300 262.600-262.600c4.700-4.700 4.700-12.300 0-17l-111-111c-4.800-4.700-12.400-4.700-17.100 0zM124.100 339.900c-5.500-5.500-5.500-14.300 0-19.800l154-154c5.500-5.500 14.300-5.500 19.800 0s5.500 14.300 0 19.800l-154 154c-5.500 5.500-14.300 5.500-19.800 0zM88 424h48v36.300l-64.500 11.300-31.100-31.100L51.700 376H88v48z"/>
<path transform="translate(563.72 213.00) scale(0.01607 0.01621)" fill="#3c3c3c" stroke="#3c3c3c" stroke-width="14" stroke-linejoin="round" d="M32 464a48 48 0 0 0 48 48h288a48 48 0 0 0 48-48V128H32zm272-256a16 16 0 0 1 32 0v224a16 16 0 0 1-32 0zm-96 0a16 16 0 0 1 32 0v224a16 16 0 0 1-32 0zm-96 0a16 16 0 0 1 32 0v224a16 16 0 0 1-32 0zM432 32H312l-9.400-18.700A24 24 0 0 0 281.100 0H166.800a23.720 23.720 0 0 0-21.400 13.300L136 32H16A16 16 0 0 0 0 48v32a16 16 0 0 0 16 16h416a16 16 0 0 0 16-16V48a16 16 0 0 0-16-16z"/>
<rect x="524.22" y="225.90" width="51.7" height="11.5" rx="1.1" fill="#fff" stroke="#939393" stroke-width="0.62"/>
<rect x="584.89" y="171.40" width="52.70" height="52.40" rx="1.3" fill="#fff" stroke="#e4e4e4" stroke-width="0.7"/>
<rect x="601.44" y="184.30" width="19.6" height="27" fill="#a8525c"/>
<path transform="translate(590.29 213.00) scale(0.01621 0.01621)" fill="#3c3c3c" stroke="#3c3c3c" stroke-width="34" stroke-linejoin="round" d="M497.9 142.1l-46.1 46.1c-4.7 4.7-12.3 4.7-17 0l-111-111c-4.7-4.7-4.7-12.3 0-17l46.1-46.1c18.700-18.700 49.100-18.700 67.900 0l60.100 60.100c18.800 18.700 18.800 49.100 0 67.900zM284.200 99.800L21.600 362.400.400 483.900c-2.900 16.400 11.400 30.600 27.800 27.800l121.500-21.300 262.600-262.600c4.700-4.700 4.700-12.300 0-17l-111-111c-4.800-4.700-12.400-4.700-17.100 0zM124.100 339.900c-5.500-5.500-5.500-14.300 0-19.800l154-154c5.500-5.500 14.300-5.500 19.800 0s5.500 14.300 0 19.800l-154 154c-5.500 5.500-14.300 5.500-19.800 0zM88 424h48v36.300l-64.500 11.300-31.100-31.100L51.700 376H88v48z"/>
<path transform="translate(624.89 213.00) scale(0.01607 0.01621)" fill="#3c3c3c" stroke="#3c3c3c" stroke-width="14" stroke-linejoin="round" d="M32 464a48 48 0 0 0 48 48h288a48 48 0 0 0 48-48V128H32zm272-256a16 16 0 0 1 32 0v224a16 16 0 0 1-32 0zm-96 0a16 16 0 0 1 32 0v224a16 16 0 0 1-32 0zm-96 0a16 16 0 0 1 32 0v224a16 16 0 0 1-32 0zM432 32H312l-9.400-18.700A24 24 0 0 0 281.100 0H166.800a23.720 23.720 0 0 0-21.400 13.300L136 32H16A16 16 0 0 0 0 48v32a16 16 0 0 0 16 16h416a16 16 0 0 0 16-16V48a16 16 0 0 0-16-16z"/>
<rect x="585.39" y="225.90" width="51.7" height="11.5" rx="1.1" fill="#fff" stroke="#939393" stroke-width="0.62"/>
<rect x="646.06" y="171.40" width="52.70" height="52.40" rx="1.3" fill="#fff" stroke="#e4e4e4" stroke-width="0.7"/>
<rect x="658.91" y="184.30" width="27" height="27" fill="#a84c62"/>
<path transform="translate(651.46 213.00) scale(0.01621 0.01621)" fill="#3c3c3c" stroke="#3c3c3c" stroke-width="34" stroke-linejoin="round" d="M497.9 142.1l-46.1 46.1c-4.7 4.7-12.3 4.7-17 0l-111-111c-4.7-4.7-4.7-12.3 0-17l46.1-46.1c18.700-18.700 49.100-18.700 67.900 0l60.100 60.100c18.800 18.700 18.800 49.100 0 67.900zM284.200 99.800L21.600 362.400.400 483.900c-2.900 16.400 11.400 30.600 27.800 27.800l121.500-21.300 262.600-262.600c4.700-4.700 4.700-12.300 0-17l-111-111c-4.800-4.700-12.400-4.700-17.100 0zM124.100 339.900c-5.500-5.500-5.500-14.300 0-19.800l154-154c5.500-5.500 14.300-5.500 19.800 0s5.500 14.300 0 19.800l-154 154c-5.500 5.500-14.300 5.500-19.800 0zM88 424h48v36.300l-64.500 11.300-31.100-31.100L51.700 376H88v48z"/>
<path transform="translate(686.06 213.00) scale(0.01607 0.01621)" fill="#3c3c3c" stroke="#3c3c3c" stroke-width="14" stroke-linejoin="round" d="M32 464a48 48 0 0 0 48 48h288a48 48 0 0 0 48-48V128H32zm272-256a16 16 0 0 1 32 0v224a16 16 0 0 1-32 0zm-96 0a16 16 0 0 1 32 0v224a16 16 0 0 1-32 0zm-96 0a16 16 0 0 1 32 0v224a16 16 0 0 1-32 0zM432 32H312l-9.400-18.700A24 24 0 0 0 281.100 0H166.800a23.720 23.720 0 0 0-21.400 13.300L136 32H16A16 16 0 0 0 0 48v32a16 16 0 0 0 16 16h416a16 16 0 0 0 16-16V48a16 16 0 0 0-16-16z"/>
<rect x="646.56" y="225.90" width="51.7" height="11.5" rx="1.1" fill="#fff" stroke="#939393" stroke-width="0.62"/>
<rect x="707.23" y="171.40" width="52.70" height="52.40" rx="1.3" fill="#fff" stroke="#e4e4e4" stroke-width="0.7"/>
<rect x="720.08" y="184.30" width="27" height="27" fill="#b8523c"/>
<path transform="translate(712.63 213.00) scale(0.01621 0.01621)" fill="#3c3c3c" stroke="#3c3c3c" stroke-width="34" stroke-linejoin="round" d="M497.9 142.1l-46.1 46.1c-4.7 4.7-12.3 4.7-17 0l-111-111c-4.7-4.7-4.7-12.3 0-17l46.1-46.1c18.700-18.700 49.100-18.700 67.900 0l60.100 60.100c18.800 18.700 18.800 49.100 0 67.900zM284.200 99.800L21.600 362.400.400 483.900c-2.900 16.400 11.400 30.600 27.800 27.800l121.500-21.300 262.600-262.600c4.700-4.700 4.700-12.300 0-17l-111-111c-4.800-4.700-12.400-4.700-17.100 0zM124.100 339.900c-5.500-5.500-5.500-14.300 0-19.800l154-154c5.500-5.500 14.300-5.500 19.800 0s5.500 14.300 0 19.800l-154 154c-5.500 5.500-14.300 5.500-19.800 0zM88 424h48v36.300l-64.500 11.300-31.100-31.100L51.700 376H88v48z"/>
<path transform="translate(747.23 213.00) scale(0.01607 0.01621)" fill="#3c3c3c" stroke="#3c3c3c" stroke-width="14" stroke-linejoin="round" d="M32 464a48 48 0 0 0 48 48h288a48 48 0 0 0 48-48V128H32zm272-256a16 16 0 0 1 32 0v224a16 16 0 0 1-32 0zm-96 0a16 16 0 0 1 32 0v224a16 16 0 0 1-32 0zm-96 0a16 16 0 0 1 32 0v224a16 16 0 0 1-32 0zM432 32H312l-9.400-18.700A24 24 0 0 0 281.100 0H166.800a23.720 23.720 0 0 0-21.400 13.300L136 32H16A16 16 0 0 0 0 48v32a16 16 0 0 0 16 16h416a16 16 0 0 0 16-16V48a16 16 0 0 0-16-16z"/>
<rect x="707.73" y="225.90" width="51.7" height="11.5" rx="1.1" fill="#fff" stroke="#939393" stroke-width="0.62"/>
<rect x="768.40" y="171.40" width="52.70" height="52.40" rx="1.3" fill="#fff" stroke="#e4e4e4" stroke-width="0.7"/>
<rect x="781.25" y="184.30" width="27" height="27" fill="#c87468"/>
<path transform="translate(773.80 213.00) scale(0.01621 0.01621)" fill="#3c3c3c" stroke="#3c3c3c" stroke-width="34" stroke-linejoin="round" d="M497.9 142.1l-46.1 46.1c-4.7 4.7-12.3 4.7-17 0l-111-111c-4.7-4.7-4.7-12.3 0-17l46.1-46.1c18.700-18.700 49.100-18.700 67.900 0l60.100 60.100c18.800 18.700 18.800 49.100 0 67.900zM284.200 99.800L21.600 362.400.400 483.900c-2.900 16.400 11.400 30.600 27.800 27.800l121.500-21.300 262.600-262.600c4.700-4.700 4.700-12.300 0-17l-111-111c-4.800-4.700-12.400-4.700-17.100 0zM124.100 339.900c-5.500-5.500-5.500-14.300 0-19.800l154-154c5.500-5.500 14.300-5.500 19.800 0s5.500 14.300 0 19.800l-154 154c-5.500 5.500-14.300 5.500-19.800 0zM88 424h48v36.300l-64.500 11.300-31.100-31.100L51.700 376H88v48z"/>
<path transform="translate(808.40 213.00) scale(0.01607 0.01621)" fill="#3c3c3c" stroke="#3c3c3c" stroke-width="14" stroke-linejoin="round" d="M32 464a48 48 0 0 0 48 48h288a48 48 0 0 0 48-48V128H32zm272-256a16 16 0 0 1 32 0v224a16 16 0 0 1-32 0zm-96 0a16 16 0 0 1 32 0v224a16 16 0 0 1-32 0zm-96 0a16 16 0 0 1 32 0v224a16 16 0 0 1-32 0zM432 32H312l-9.400-18.700A24 24 0 0 0 281.100 0H166.800a23.720 23.720 0 0 0-21.400 13.300L136 32H16A16 16 0 0 0 0 48v32a16 16 0 0 0 16 16h416a16 16 0 0 0 16-16V48a16 16 0 0 0-16-16z"/>
<rect x="768.90" y="225.90" width="51.7" height="11.5" rx="1.1" fill="#fff" stroke="#939393" stroke-width="0.62"/>
<rect x="829.57" y="171.40" width="52.70" height="52.40" rx="1.3" fill="#fff" stroke="#e4e4e4" stroke-width="0.7"/>
<rect x="842.42" y="184.30" width="27" height="27" fill="#dc8e7e"/>
<path transform="translate(834.97 213.00) scale(0.01621 0.01621)" fill="#3c3c3c" stroke="#3c3c3c" stroke-width="34" stroke-linejoin="round" d="M497.9 142.1l-46.1 46.1c-4.7 4.7-12.3 4.7-17 0l-111-111c-4.7-4.7-4.7-12.3 0-17l46.1-46.1c18.700-18.700 49.100-18.700 67.900 0l60.100 60.100c18.800 18.700 18.800 49.100 0 67.900zM284.200 99.800L21.600 362.400.400 483.900c-2.900 16.400 11.400 30.600 27.800 27.800l121.500-21.300 262.600-262.600c4.700-4.700 4.700-12.300 0-17l-111-111c-4.800-4.700-12.400-4.700-17.100 0zM124.100 339.900c-5.500-5.500-5.500-14.300 0-19.800l154-154c5.500-5.500 14.300-5.500 19.800 0s5.500 14.300 0 19.800l-154 154c-5.500 5.500-14.300 5.500-19.800 0zM88 424h48v36.300l-64.500 11.300-31.100-31.100L51.700 376H88v48z"/>
<path transform="translate(869.57 213.00) scale(0.01607 0.01621)" fill="#3c3c3c" stroke="#3c3c3c" stroke-width="14" stroke-linejoin="round" d="M32 464a48 48 0 0 0 48 48h288a48 48 0 0 0 48-48V128H32zm272-256a16 16 0 0 1 32 0v224a16 16 0 0 1-32 0zm-96 0a16 16 0 0 1 32 0v224a16 16 0 0 1-32 0zm-96 0a16 16 0 0 1 32 0v224a16 16 0 0 1-32 0zM432 32H312l-9.400-18.700A24 24 0 0 0 281.100 0H166.800a23.720 23.720 0 0 0-21.400 13.300L136 32H16A16 16 0 0 0 0 48v32a16 16 0 0 0 16 16h416a16 16 0 0 0 16-16V48a16 16 0 0 0-16-16z"/>
<rect x="830.07" y="225.90" width="51.7" height="11.5" rx="1.1" fill="#fff" stroke="#939393" stroke-width="0.62"/>
<rect x="890.74" y="171.40" width="52.70" height="52.40" rx="1.3" fill="#fff" stroke="#e4e4e4" stroke-width="0.7"/>
<rect x="907.29" y="184.30" width="19.6" height="27" fill="#d47c70"/>
<path transform="translate(896.14 213.00) scale(0.01621 0.01621)" fill="#3c3c3c" stroke="#3c3c3c" stroke-width="34" stroke-linejoin="round" d="M497.9 142.1l-46.1 46.1c-4.7 4.7-12.3 4.7-17 0l-111-111c-4.7-4.7-4.7-12.3 0-17l46.1-46.1c18.700-18.700 49.100-18.700 67.900 0l60.100 60.100c18.800 18.700 18.800 49.100 0 67.900zM284.200 99.800L21.600 362.400.400 483.900c-2.900 16.400 11.400 30.600 27.800 27.800l121.500-21.300 262.600-262.600c4.700-4.700 4.700-12.300 0-17l-111-111c-4.800-4.700-12.400-4.700-17.100 0zM124.100 339.900c-5.500-5.500-5.500-14.300 0-19.800l154-154c5.500-5.500 14.300-5.500 19.800 0s5.500 14.300 0 19.800l-154 154c-5.500 5.500-14.300 5.500-19.800 0zM88 424h48v36.300l-64.500 11.300-31.100-31.100L51.700 376H88v48z"/>
<path transform="translate(930.74 213.00) scale(0.01607 0.01621)" fill="#3c3c3c" stroke="#3c3c3c" stroke-width="14" stroke-linejoin="round" d="M32 464a48 48 0 0 0 48 48h288a48 48 0 0 0 48-48V128H32zm272-256a16 16 0 0 1 32 0v224a16 16 0 0 1-32 0zm-96 0a16 16 0 0 1 32 0v224a16 16 0 0 1-32 0zm-96 0a16 16 0 0 1 32 0v224a16 16 0 0 1-32 0zM432 32H312l-9.400-18.700A24 24 0 0 0 281.100 0H166.800a23.720 23.720 0 0 0-21.400 13.300L136 32H16A16 16 0 0 0 0 48v32a16 16 0 0 0 16 16h416a16 16 0 0 0 16-16V48a16 16 0 0 0-16-16z"/>
<rect x="891.24" y="225.90" width="51.7" height="11.5" rx="1.1" fill="#fff" stroke="#939393" stroke-width="0.62"/>
<rect x="156.70" y="241.00" width="52.70" height="52.40" rx="1.3" fill="#fff" stroke="#e4e4e4" stroke-width="0.7"/>
<rect x="173.90" y="253.90" width="18.3" height="27" fill="#e09c8c"/>
<path transform="translate(162.10 282.60) scale(0.01621 0.01621)" fill="#3c3c3c" stroke="#3c3c3c" stroke-width="34" stroke-linejoin="round" d="M497.9 142.1l-46.1 46.1c-4.7 4.7-12.3 4.7-17 0l-111-111c-4.7-4.7-4.7-12.3 0-17l46.1-46.1c18.700-18.700 49.100-18.700 67.900 0l60.100 60.100c18.800 18.700 18.800 49.100 0 67.900zM284.200 99.800L21.600 362.400.400 483.900c-2.900 16.400 11.400 30.600 27.800 27.800l121.500-21.300 262.600-262.600c4.700-4.700 4.700-12.300 0-17l-111-111c-4.800-4.700-12.400-4.700-17.100 0zM124.100 339.900c-5.500-5.500-5.500-14.300 0-19.800l154-154c5.500-5.500 14.300-5.500 19.800 0s5.500 14.300 0 19.800l-154 154c-5.500 5.500-14.300 5.500-19.800 0zM88 424h48v36.300l-64.500 11.300-31.100-31.100L51.700 376H88v48z"/>
<path transform="translate(196.70 282.60) scale(0.01607 0.01621)" fill="#3c3c3c" stroke="#3c3c3c" stroke-width="14" stroke-linejoin="round" d="M32 464a48 48 0 0 0 48 48h288a48 48 0 0 0 48-48V128H32zm272-256a16 16 0 0 1 32 0v224a16 16 0 0 1-32 0zm-96 0a16 16 0 0 1 32 0v224a16 16 0 0 1-32 0zm-96 0a16 16 0 0 1 32 0v224a16 16 0 0 1-32 0zM432 32H312l-9.400-18.700A24 24 0 0 0 281.100 0H166.800a23.720 23.720 0 0 0-21.400 13.300L136 32H16A16 16 0 0 0 0 48v32a16 16 0 0 0 16 16h416a16 16 0 0 0 16-16V48a16 16 0 0 0-16-16z"/>
<rect x="157.20" y="295.50" width="51.7" height="11.5" rx="1.1" fill="#fff" stroke="#939393" stroke-width="0.62"/>
<rect x="217.87" y="241.00" width="52.70" height="52.40" rx="1.3" fill="#fff" stroke="#e4e4e4" stroke-width="0.7"/>
<rect x="235.07" y="253.90" width="18.3" height="27" fill="#cf9b95"/>
<path transform="translate(223.27 282.60) scale(0.01621 0.01621)" fill="#3c3c3c" stroke="#3c3c3c" stroke-width="34" stroke-linejoin="round" d="M497.9 142.1l-46.1 46.1c-4.7 4.7-12.3 4.7-17 0l-111-111c-4.7-4.7-4.7-12.3 0-17l46.1-46.1c18.700-18.700 49.100-18.700 67.900 0l60.100 60.100c18.800 18.700 18.800 49.100 0 67.900zM284.200 99.800L21.600 362.400.400 483.900c-2.900 16.400 11.400 30.600 27.800 27.800l121.500-21.300 262.600-262.600c4.700-4.700 4.700-12.300 0-17l-111-111c-4.800-4.700-12.400-4.700-17.100 0zM124.100 339.900c-5.500-5.500-5.500-14.300 0-19.800l154-154c5.500-5.500 14.300-5.500 19.800 0s5.500 14.300 0 19.800l-154 154c-5.500 5.500-14.300 5.500-19.800 0zM88 424h48v36.300l-64.500 11.300-31.100-31.100L51.700 376H88v48z"/>
<path transform="translate(257.87 282.60) scale(0.01607 0.01621)" fill="#3c3c3c" stroke="#3c3c3c" stroke-width="14" stroke-linejoin="round" d="M32 464a48 48 0 0 0 48 48h288a48 48 0 0 0 48-48V128H32zm272-256a16 16 0 0 1 32 0v224a16 16 0 0 1-32 0zm-96 0a16 16 0 0 1 32 0v224a16 16 0 0 1-32 0zm-96 0a16 16 0 0 1 32 0v224a16 16 0 0 1-32 0zM432 32H312l-9.400-18.700A24 24 0 0 0 281.100 0H166.800a23.720 23.720 0 0 0-21.400 13.300L136 32H16A16 16 0 0 0 0 48v32a16 16 0 0 0 16 16h416a16 16 0 0 0 16-16V48a16 16 0 0 0-16-16z"/>
<rect x="218.37" y="295.50" width="51.7" height="11.5" rx="1.1" fill="#fff" stroke="#939393" stroke-width="0.62"/>
<rect x="279.04" y="241.00" width="52.70" height="52.40" rx="1.3" fill="#fff" stroke="#e4e4e4" stroke-width="0.7"/>
<rect x="296.24" y="253.90" width="18.3" height="27" fill="#e4a6a4"/>
<path transform="translate(284.44 282.60) scale(0.01621 0.01621)" fill="#3c3c3c" stroke="#3c3c3c" stroke-width="34" stroke-linejoin="round" d="M497.9 142.1l-46.1 46.1c-4.7 4.7-12.3 4.7-17 0l-111-111c-4.7-4.7-4.7-12.3 0-17l46.1-46.1c18.700-18.700 49.100-18.700 67.900 0l60.100 60.100c18.800 18.700 18.800 49.100 0 67.900zM284.200 99.800L21.600 362.400.400 483.900c-2.900 16.400 11.400 30.600 27.800 27.800l121.500-21.300 262.600-262.600c4.700-4.700 4.700-12.300 0-17l-111-111c-4.800-4.700-12.400-4.700-17.100 0zM124.100 339.900c-5.500-5.500-5.500-14.300 0-19.800l154-154c5.500-5.500 14.300-5.500 19.800 0s5.500 14.300 0 19.800l-154 154c-5.500 5.500-14.300 5.500-19.800 0zM88 424h48v36.300l-64.500 11.300-31.100-31.100L51.700 376H88v48z"/>
<path transform="translate(319.04 282.60) scale(0.01607 0.01621)" fill="#3c3c3c" stroke="#3c3c3c" stroke-width="14" stroke-linejoin="round" d="M32 464a48 48 0 0 0 48 48h288a48 48 0 0 0 48-48V128H32zm272-256a16 16 0 0 1 32 0v224a16 16 0 0 1-32 0zm-96 0a16 16 0 0 1 32 0v224a16 16 0 0 1-32 0zm-96 0a16 16 0 0 1 32 0v224a16 16 0 0 1-32 0zM432 32H312l-9.400-18.700A24 24 0 0 0 281.100 0H166.800a23.720 23.720 0 0 0-21.400 13.300L136 32H16A16 16 0 0 0 0 48v32a16 16 0 0 0 16 16h416a16 16 0 0 0 16-16V48a16 16 0 0 0-16-16z"/>
<rect x="279.54" y="295.50" width="51.7" height="11.5" rx="1.1" fill="#fff" stroke="#939393" stroke-width="0.62"/>
<rect x="340.21" y="241.00" width="52.70" height="52.40" rx="1.3" fill="#fff" stroke="#e4e4e4" stroke-width="0.7"/>
<rect x="357.41" y="253.90" width="18.3" height="27" fill="#e4a2a8"/>
<path transform="translate(345.61 282.60) scale(0.01621 0.01621)" fill="#3c3c3c" stroke="#3c3c3c" stroke-width="34" stroke-linejoin="round" d="M497.9 142.1l-46.1 46.1c-4.7 4.7-12.3 4.7-17 0l-111-111c-4.7-4.7-4.7-12.3 0-17l46.1-46.1c18.700-18.700 49.100-18.700 67.900 0l60.100 60.100c18.800 18.700 18.800 49.100 0 67.900zM284.200 99.800L21.600 362.400.400 483.900c-2.900 16.400 11.400 30.600 27.800 27.800l121.500-21.300 262.600-262.600c4.700-4.700 4.700-12.300 0-17l-111-111c-4.800-4.700-12.400-4.700-17.100 0zM124.100 339.900c-5.500-5.500-5.500-14.300 0-19.800l154-154c5.500-5.500 14.300-5.500 19.800 0s5.500 14.300 0 19.800l-154 154c-5.500 5.500-14.300 5.500-19.800 0zM88 424h48v36.300l-64.500 11.300-31.100-31.100L51.700 376H88v48z"/>
<path transform="translate(380.21 282.60) scale(0.01607 0.01621)" fill="#3c3c3c" stroke="#3c3c3c" stroke-width="14" stroke-linejoin="round" d="M32 464a48 48 0 0 0 48 48h288a48 48 0 0 0 48-48V128H32zm272-256a16 16 0 0 1 32 0v224a16 16 0 0 1-32 0zm-96 0a16 16 0 0 1 32 0v224a16 16 0 0 1-32 0zm-96 0a16 16 0 0 1 32 0v224a16 16 0 0 1-32 0zM432 32H312l-9.400-18.700A24 24 0 0 0 281.100 0H166.800a23.720 23.720 0 0 0-21.400 13.300L136 32H16A16 16 0 0 0 0 48v32a16 16 0 0 0 16 16h416a16 16 0 0 0 16-16V48a16 16 0 0 0-16-16z"/>
<rect x="340.71" y="295.50" width="51.7" height="11.5" rx="1.1" fill="#fff" stroke="#939393" stroke-width="0.62"/>
<rect x="401.38" y="241.00" width="52.70" height="52.40" rx="1.3" fill="#fff" stroke="#e4e4e4" stroke-width="0.7"/>
<rect x="418.58" y="253.90" width="18.3" height="27" fill="#eab0cc"/>
<path transform="translate(406.78 282.60) scale(0.01621 0.01621)" fill="#3c3c3c" stroke="#3c3c3c" stroke-width="34" stroke-linejoin="round" d="M497.9 142.1l-46.1 46.1c-4.7 4.7-12.3 4.7-17 0l-111-111c-4.7-4.7-4.7-12.3 0-17l46.1-46.1c18.700-18.700 49.100-18.700 67.900 0l60.100 60.100c18.800 18.700 18.800 49.100 0 67.900zM284.200 99.800L21.600 362.400.400 483.900c-2.900 16.400 11.400 30.600 27.800 27.800l121.500-21.300 262.600-262.600c4.700-4.700 4.700-12.300 0-17l-111-111c-4.800-4.700-12.400-4.700-17.100 0zM124.100 339.900c-5.500-5.500-5.500-14.300 0-19.800l154-154c5.500-5.500 14.300-5.500 19.800 0s5.500 14.300 0 19.800l-154 154c-5.500 5.500-14.300 5.500-19.800 0zM88 424h48v36.300l-64.500 11.300-31.100-31.100L51.700 376H88v48z"/>
<path transform="translate(441.38 282.60) scale(0.01607 0.01621)" fill="#3c3c3c" stroke="#3c3c3c" stroke-width="14" stroke-linejoin="round" d="M32 464a48 48 0 0 0 48 48h288a48 48 0 0 0 48-48V128H32zm272-256a16 16 0 0 1 32 0v224a16 16 0 0 1-32 0zm-96 0a16 16 0 0 1 32 0v224a16 16 0 0 1-32 0zm-96 0a16 16 0 0 1 32 0v224a16 16 0 0 1-32 0zM432 32H312l-9.400-18.700A24 24 0 0 0 281.100 0H166.800a23.720 23.720 0 0 0-21.400 13.300L136 32H16A16 16 0 0 0 0 48v32a16 16 0 0 0 16 16h416a16 16 0 0 0 16-16V48a16 16 0 0 0-16-16z"/>
<rect x="401.88" y="295.50" width="51.7" height="11.5" rx="1.1" fill="#fff" stroke="#939393" stroke-width="0.62"/>
<rect x="462.55" y="241.00" width="52.70" height="52.40" rx="1.3" fill="#fff" stroke="#e4e4e4" stroke-width="0.7"/>
<rect x="479.75" y="253.90" width="18.3" height="27" fill="#f0c4c4"/>
<path transform="translate(467.95 282.60) scale(0.01621 0.01621)" fill="#3c3c3c" stroke="#3c3c3c" stroke-width="34" stroke-linejoin="round" d="M497.9 142.1l-46.1 46.1c-4.7 4.7-12.3 4.7-17 0l-111-111c-4.7-4.7-4.7-12.3 0-17l46.1-46.1c18.700-18.700 49.100-18.700 67.900 0l60.100 60.100c18.800 18.700 18.800 49.100 0 67.900zM284.200 99.800L21.600 362.400.400 483.900c-2.900 16.400 11.400 30.600 27.800 27.800l121.500-21.300 262.600-262.600c4.700-4.700 4.700-12.300 0-17l-111-111c-4.800-4.700-12.400-4.700-17.100 0zM124.100 339.900c-5.500-5.500-5.500-14.300 0-19.800l154-154c5.500-5.500 14.300-5.500 19.800 0s5.500 14.300 0 19.800l-154 154c-5.500 5.500-14.300 5.500-19.800 0zM88 424h48v36.300l-64.500 11.300-31.100-31.100L51.700 376H88v48z"/>
<path transform="translate(502.55 282.60) scale(0.01607 0.01621)" fill="#3c3c3c" stroke="#3c3c3c" stroke-width="14" stroke-linejoin="round" d="M32 464a48 48 0 0 0 48 48h288a48 48 0 0 0 48-48V128H32zm272-256a16 16 0 0 1 32 0v224a16 16 0 0 1-32 0zm-96 0a16 16 0 0 1 32 0v224a16 16 0 0 1-32 0zm-96 0a16 16 0 0 1 32 0v224a16 16 0 0 1-32 0zM432 32H312l-9.400-18.700A24 24 0 0 0 281.100 0H166.800a23.720 23.720 0 0 0-21.400 13.300L136 32H16A16 16 0 0 0 0 48v32a16 16 0 0 0 16 16h416a16 16 0 0 0 16-16V48a16 16 0 0 0-16-16z"/>
<rect x="463.05" y="295.50" width="51.7" height="11.5" rx="1.1" fill="#fff" stroke="#939393" stroke-width="0.62"/>
<rect x="523.72" y="241.00" width="52.70" height="52.40" rx="1.3" fill="#fff" stroke="#e4e4e4" stroke-width="0.7"/>
<rect x="536.57" y="253.90" width="27" height="27" fill="#e4bcc0"/>
<path transform="translate(529.12 282.60) scale(0.01621 0.01621)" fill="#3c3c3c" stroke="#3c3c3c" stroke-width="34" stroke-linejoin="round" d="M497.9 142.1l-46.1 46.1c-4.7 4.7-12.3 4.7-17 0l-111-111c-4.7-4.7-4.7-12.3 0-17l46.1-46.1c18.700-18.700 49.100-18.700 67.900 0l60.100 60.100c18.800 18.700 18.800 49.100 0 67.900zM284.200 99.800L21.600 362.400.400 483.900c-2.900 16.400 11.400 30.600 27.800 27.800l121.500-21.300 262.600-262.600c4.700-4.700 4.700-12.300 0-17l-111-111c-4.800-4.700-12.400-4.700-17.100 0zM124.100 339.900c-5.500-5.500-5.500-14.300 0-19.800l154-154c5.500-5.500 14.300-5.500 19.800 0s5.500 14.300 0 19.800l-154 154c-5.500 5.500-14.300 5.500-19.800 0zM88 424h48v36.300l-64.500 11.300-31.100-31.100L51.700 376H88v48z"/>
<path transform="translate(563.72 282.60) scale(0.01607 0.01621)" fill="#3c3c3c" stroke="#3c3c3c" stroke-width="14" stroke-linejoin="round" d="M32 464a48 48 0 0 0 48 48h288a48 48 0 0 0 48-48V128H32zm272-256a16 16 0 0 1 32 0v224a16 16 0 0 1-32 0zm-96 0a16 16 0 0 1 32 0v224a16 16 0 0 1-32 0zm-96 0a16 16 0 0 1 32 0v224a16 16 0 0 1-32 0zM432 32H312l-9.400-18.700A24 24 0 0 0 281.100 0H166.800a23.720 23.720 0 0 0-21.400 13.300L136 32H16A16 16 0 0 0 0 48v32a16 16 0 0 0 16 16h416a16 16 0 0 0 16-16V48a16 16 0 0 0-16-16z"/>
<rect x="524.22" y="295.50" width="51.7" height="11.5" rx="1.1" fill="#fff" stroke="#939393" stroke-width="0.62"/>
<rect x="584.89" y="241.00" width="52.70" height="52.40" rx="1.3" fill="#fff" stroke="#e4e4e4" stroke-width="0.7"/>
<rect x="597.74" y="253.90" width="27" height="27" fill="url(#g3)"/>
<path transform="translate(590.29 282.60) scale(0.01621 0.01621)" fill="#3c3c3c" stroke="#3c3c3c" stroke-width="34" stroke-linejoin="round" d="M497.9 142.1l-46.1 46.1c-4.7 4.7-12.3 4.7-17 0l-111-111c-4.7-4.7-4.7-12.3 0-17l46.1-46.1c18.700-18.700 49.100-18.700 67.900 0l60.100 60.100c18.800 18.700 18.800 49.100 0 67.900zM284.200 99.800L21.600 362.400.400 483.900c-2.900 16.400 11.400 30.600 27.800 27.800l121.500-21.300 262.600-262.600c4.700-4.700 4.700-12.300 0-17l-111-111c-4.800-4.700-12.400-4.700-17.100 0zM124.100 339.900c-5.500-5.500-5.500-14.300 0-19.800l154-154c5.500-5.500 14.300-5.500 19.800 0s5.500 14.300 0 19.800l-154 154c-5.500 5.500-14.300 5.500-19.800 0zM88 424h48v36.300l-64.500 11.300-31.100-31.100L51.700 376H88v48z"/>
<path transform="translate(624.89 282.60) scale(0.01607 0.01621)" fill="#3c3c3c" stroke="#3c3c3c" stroke-width="14" stroke-linejoin="round" d="M32 464a48 48 0 0 0 48 48h288a48 48 0 0 0 48-48V128H32zm272-256a16 16 0 0 1 32 0v224a16 16 0 0 1-32 0zm-96 0a16 16 0 0 1 32 0v224a16 16 0 0 1-32 0zm-96 0a16 16 0 0 1 32 0v224a16 16 0 0 1-32 0zM432 32H312l-9.400-18.700A24 24 0 0 0 281.100 0H166.800a23.720 23.720 0 0 0-21.400 13.300L136 32H16A16 16 0 0 0 0 48v32a16 16 0 0 0 16 16h416a16 16 0 0 0 16-16V48a16 16 0 0 0-16-16z"/>
<rect x="585.39" y="295.50" width="51.7" height="11.5" rx="1.1" fill="#fff" stroke="#939393" stroke-width="0.62"/>
<rect x="646.06" y="241.00" width="52.70" height="52.40" rx="1.3" fill="#fff" stroke="#e4e4e4" stroke-width="0.7"/>
<rect x="658.91" y="253.90" width="27" height="27" fill="#fcd2c8"/>
<path transform="translate(651.46 282.60) scale(0.01621 0.01621)" fill="#3c3c3c" stroke="#3c3c3c" stroke-width="34" stroke-linejoin="round" d="M497.9 142.1l-46.1 46.1c-4.7 4.7-12.3 4.7-17 0l-111-111c-4.7-4.7-4.7-12.3 0-17l46.1-46.1c18.700-18.700 49.100-18.700 67.900 0l60.100 60.100c18.800 18.700 18.800 49.100 0 67.900zM284.200 99.800L21.600 362.400.400 483.900c-2.900 16.400 11.400 30.600 27.800 27.800l121.500-21.300 262.600-262.600c4.700-4.700 4.700-12.300 0-17l-111-111c-4.800-4.700-12.400-4.700-17.100 0zM124.100 339.900c-5.500-5.500-5.500-14.300 0-19.800l154-154c5.500-5.500 14.300-5.500 19.800 0s5.500 14.300 0 19.800l-154 154c-5.500 5.500-14.300 5.500-19.800 0zM88 424h48v36.300l-64.500 11.300-31.100-31.100L51.700 376H88v48z"/>
<path transform="translate(686.06 282.60) scale(0.01607 0.01621)" fill="#3c3c3c" stroke="#3c3c3c" stroke-width="14" stroke-linejoin="round" d="M32 464a48 48 0 0 0 48 48h288a48 48 0 0 0 48-48V128H32zm272-256a16 16 0 0 1 32 0v224a16 16 0 0 1-32 0zm-96 0a16 16 0 0 1 32 0v224a16 16 0 0 1-32 0zm-96 0a16 16 0 0 1 32 0v224a16 16 0 0 1-32 0zM432 32H312l-9.400-18.700A24 24 0 0 0 281.100 0H166.800a23.720 23.720 0 0 0-21.400 13.300L136 32H16A16 16 0 0 0 0 48v32a16 16 0 0 0 16 16h416a16 16 0 0 0 16-16V48a16 16 0 0 0-16-16z"/>
<rect x="646.56" y="295.50" width="51.7" height="11.5" rx="1.1" fill="#fff" stroke="#939393" stroke-width="0.62"/>
<rect x="707.23" y="241.00" width="52.70" height="52.40" rx="1.3" fill="#fff" stroke="#e4e4e4" stroke-width="0.7"/>
<rect x="724.43" y="253.90" width="18.3" height="27" fill="#fcdad6"/>
<path transform="translate(712.63 282.60) scale(0.01621 0.01621)" fill="#3c3c3c" stroke="#3c3c3c" stroke-width="34" stroke-linejoin="round" d="M497.9 142.1l-46.1 46.1c-4.7 4.7-12.3 4.7-17 0l-111-111c-4.7-4.7-4.7-12.3 0-17l46.1-46.1c18.700-18.700 49.100-18.700 67.900 0l60.100 60.100c18.800 18.700 18.800 49.100 0 67.900zM284.200 99.800L21.600 362.400.400 483.900c-2.900 16.400 11.400 30.600 27.800 27.800l121.500-21.300 262.600-262.600c4.700-4.700 4.700-12.300 0-17l-111-111c-4.800-4.700-12.400-4.700-17.100 0zM124.100 339.900c-5.500-5.500-5.500-14.300 0-19.800l154-154c5.500-5.500 14.300-5.500 19.800 0s5.500 14.300 0 19.800l-154 154c-5.500 5.500-14.300 5.500-19.800 0zM88 424h48v36.300l-64.500 11.300-31.100-31.100L51.700 376H88v48z"/>
<path transform="translate(747.23 282.60) scale(0.01607 0.01621)" fill="#3c3c3c" stroke="#3c3c3c" stroke-width="14" stroke-linejoin="round" d="M32 464a48 48 0 0 0 48 48h288a48 48 0 0 0 48-48V128H32zm272-256a16 16 0 0 1 32 0v224a16 16 0 0 1-32 0zm-96 0a16 16 0 0 1 32 0v224a16 16 0 0 1-32 0zm-96 0a16 16 0 0 1 32 0v224a16 16 0 0 1-32 0zM432 32H312l-9.400-18.700A24 24 0 0 0 281.100 0H166.800a23.720 23.720 0 0 0-21.400 13.300L136 32H16A16 16 0 0 0 0 48v32a16 16 0 0 0 16 16h416a16 16 0 0 0 16-16V48a16 16 0 0 0-16-16z"/>
<rect x="707.73" y="295.50" width="51.7" height="11.5" rx="1.1" fill="#fff" stroke="#939393" stroke-width="0.62"/>
<rect x="768.40" y="241.00" width="52.70" height="52.40" rx="1.3" fill="#fff" stroke="#e4e4e4" stroke-width="0.7"/>
<rect x="781.25" y="253.90" width="27" height="27" fill="#f4d0d0"/>
<path transform="translate(773.80 282.60) scale(0.01621 0.01621)" fill="#3c3c3c" stroke="#3c3c3c" stroke-width="34" stroke-linejoin="round" d="M497.9 142.1l-46.1 46.1c-4.7 4.7-12.3 4.7-17 0l-111-111c-4.7-4.7-4.7-12.3 0-17l46.1-46.1c18.700-18.700 49.100-18.700 67.900 0l60.100 60.100c18.800 18.700 18.800 49.100 0 67.900zM284.200 99.800L21.600 362.400.400 483.900c-2.900 16.400 11.400 30.600 27.800 27.800l121.500-21.300 262.600-262.600c4.700-4.700 4.700-12.300 0-17l-111-111c-4.800-4.700-12.400-4.700-17.100 0zM124.100 339.900c-5.500-5.500-5.500-14.300 0-19.800l154-154c5.500-5.500 14.300-5.500 19.800 0s5.500 14.300 0 19.800l-154 154c-5.500 5.500-14.300 5.500-19.800 0zM88 424h48v36.300l-64.500 11.300-31.100-31.100L51.700 376H88v48z"/>
<path transform="translate(808.40 282.60) scale(0.01607 0.01621)" fill="#3c3c3c" stroke="#3c3c3c" stroke-width="14" stroke-linejoin="round" d="M32 464a48 48 0 0 0 48 48h288a48 48 0 0 0 48-48V128H32zm272-256a16 16 0 0 1 32 0v224a16 16 0 0 1-32 0zm-96 0a16 16 0 0 1 32 0v224a16 16 0 0 1-32 0zm-96 0a16 16 0 0 1 32 0v224a16 16 0 0 1-32 0zM432 32H312l-9.400-18.700A24 24 0 0 0 281.100 0H166.800a23.720 23.720 0 0 0-21.400 13.300L136 32H16A16 16 0 0 0 0 48v32a16 16 0 0 0 16 16h416a16 16 0 0 0 16-16V48a16 16 0 0 0-16-16z"/>
<rect x="768.90" y="295.50" width="51.7" height="11.5" rx="1.1" fill="#fff" stroke="#939393" stroke-width="0.62"/>
<rect x="829.57" y="241.00" width="52.70" height="52.40" rx="1.3" fill="#fff" stroke="#e4e4e4" stroke-width="0.7"/>
<rect x="842.42" y="253.90" width="27" height="27" fill="#fce2e2"/>
<path transform="translate(834.97 282.60) scale(0.01621 0.01621)" fill="#3c3c3c" stroke="#3c3c3c" stroke-width="34" stroke-linejoin="round" d="M497.9 142.1l-46.1 46.1c-4.7 4.7-12.3 4.7-17 0l-111-111c-4.7-4.7-4.7-12.3 0-17l46.1-46.1c18.700-18.700 49.100-18.700 67.900 0l60.100 60.100c18.800 18.700 18.800 49.100 0 67.900zM284.200 99.800L21.600 362.400.400 483.900c-2.900 16.400 11.400 30.600 27.800 27.800l121.500-21.300 262.600-262.600c4.700-4.700 4.700-12.300 0-17l-111-111c-4.800-4.700-12.400-4.700-17.100 0zM124.100 339.900c-5.500-5.500-5.500-14.300 0-19.800l154-154c5.500-5.500 14.300-5.500 19.800 0s5.500 14.300 0 19.800l-154 154c-5.500 5.500-14.300 5.500-19.800 0zM88 424h48v36.300l-64.500 11.300-31.100-31.100L51.700 376H88v48z"/>
<path transform="translate(869.57 282.60) scale(0.01607 0.01621)" fill="#3c3c3c" stroke="#3c3c3c" stroke-width="14" stroke-linejoin="round" d="M32 464a48 48 0 0 0 48 48h288a48 48 0 0 0 48-48V128H32zm272-256a16 16 0 0 1 32 0v224a16 16 0 0 1-32 0zm-96 0a16 16 0 0 1 32 0v224a16 16 0 0 1-32 0zm-96 0a16 16 0 0 1 32 0v224a16 16 0 0 1-32 0zM432 32H312l-9.400-18.700A24 24 0 0 0 281.100 0H166.800a23.720 23.720 0 0 0-21.400 13.300L136 32H16A16 16 0 0 0 0 48v32a16 16 0 0 0 16 16h416a16 16 0 0 0 16-16V48a16 16 0 0 0-16-16z"/>
<rect x="830.07" y="295.50" width="51.7" height="11.5" rx="1.1" fill="#fff" stroke="#939393" stroke-width="0.62"/>
<rect x="890.74" y="241.00" width="52.70" height="52.40" rx="1.3" fill="#fff" stroke="#e4e4e4" stroke-width="0.7"/>
<rect x="907.94" y="253.90" width="18.3" height="27" fill="url(#g4)"/>
<path transform="translate(896.14 282.60) scale(0.01621 0.01621)" fill="#3c3c3c" stroke="#3c3c3c" stroke-width="34" stroke-linejoin="round" d="M497.9 142.1l-46.1 46.1c-4.7 4.7-12.3 4.7-17 0l-111-111c-4.7-4.7-4.7-12.3 0-17l46.1-46.1c18.700-18.700 49.100-18.700 67.900 0l60.100 60.100c18.800 18.700 18.800 49.100 0 67.900zM284.200 99.800L21.600 362.400.400 483.900c-2.900 16.400 11.400 30.600 27.800 27.800l121.500-21.300 262.600-262.600c4.700-4.700 4.700-12.300 0-17l-111-111c-4.800-4.700-12.400-4.700-17.100 0zM124.100 339.900c-5.500-5.500-5.500-14.300 0-19.800l154-154c5.500-5.500 14.300-5.500 19.800 0s5.500 14.300 0 19.800l-154 154c-5.500 5.500-14.300 5.500-19.800 0zM88 424h48v36.300l-64.500 11.300-31.100-31.100L51.700 376H88v48z"/>
<path transform="translate(930.74 282.60) scale(0.01607 0.01621)" fill="#3c3c3c" stroke="#3c3c3c" stroke-width="14" stroke-linejoin="round" d="M32 464a48 48 0 0 0 48 48h288a48 48 0 0 0 48-48V128H32zm272-256a16 16 0 0 1 32 0v224a16 16 0 0 1-32 0zm-96 0a16 16 0 0 1 32 0v224a16 16 0 0 1-32 0zm-96 0a16 16 0 0 1 32 0v224a16 16 0 0 1-32 0zM432 32H312l-9.400-18.700A24 24 0 0 0 281.100 0H166.800a23.720 23.720 0 0 0-21.400 13.300L136 32H16A16 16 0 0 0 0 48v32a16 16 0 0 0 16 16h416a16 16 0 0 0 16-16V48a16 16 0 0 0-16-16z"/>
<rect x="891.24" y="295.50" width="51.7" height="11.5" rx="1.1" fill="#fff" stroke="#939393" stroke-width="0.62"/>
<rect x="156.70" y="310.60" width="52.70" height="52.40" rx="1.3" fill="#fff" stroke="#e4e4e4" stroke-width="0.7"/>
<rect x="169.45" y="328.10" width="27.2" height="17.8" fill="url(#g5)"/>
<path transform="translate(162.10 352.20) scale(0.01621 0.01621)" fill="#3c3c3c" stroke="#3c3c3c" stroke-width="34" stroke-linejoin="round" d="M497.9 142.1l-46.1 46.1c-4.7 4.7-12.3 4.7-17 0l-111-111c-4.7-4.7-4.7-12.3 0-17l46.1-46.1c18.700-18.700 49.100-18.700 67.900 0l60.100 60.100c18.800 18.700 18.800 49.100 0 67.900zM284.200 99.800L21.600 362.400.400 483.900c-2.900 16.400 11.400 30.600 27.800 27.800l121.500-21.300 262.600-262.600c4.700-4.700 4.700-12.300 0-17l-111-111c-4.800-4.700-12.400-4.700-17.100 0zM124.100 339.900c-5.500-5.500-5.500-14.300 0-19.800l154-154c5.500-5.500 14.300-5.500 19.800 0s5.500 14.300 0 19.800l-154 154c-5.500 5.500-14.300 5.500-19.800 0zM88 424h48v36.300l-64.500 11.300-31.100-31.100L51.700 376H88v48z"/>
<path transform="translate(196.70 352.20) scale(0.01607 0.01621)" fill="#3c3c3c" stroke="#3c3c3c" stroke-width="14" stroke-linejoin="round" d="M32 464a48 48 0 0 0 48 48h288a48 48 0 0 0 48-48V128H32zm272-256a16 16 0 0 1 32 0v224a16 16 0 0 1-32 0zm-96 0a16 16 0 0 1 32 0v224a16 16 0 0 1-32 0zm-96 0a16 16 0 0 1 32 0v224a16 16 0 0 1-32 0zM432 32H312l-9.400-18.700A24 24 0 0 0 281.100 0H166.800a23.720 23.720 0 0 0-21.400 13.300L136 32H16A16 16 0 0 0 0 48v32a16 16 0 0 0 16 16h416a16 16 0 0 0 16-16V48a16 16 0 0 0-16-16z"/>
<rect x="157.20" y="365.10" width="51.7" height="11.5" rx="1.1" fill="#fff" stroke="#939393" stroke-width="0.62"/>
<rect x="217.87" y="310.60" width="52.70" height="52.40" rx="1.3" fill="#fff" stroke="#e4e4e4" stroke-width="0.7"/>
<rect x="230.72" y="323.50" width="27" height="27" fill="#b88078"/>
<path transform="translate(223.27 352.20) scale(0.01621 0.01621)" fill="#3c3c3c" stroke="#3c3c3c" stroke-width="34" stroke-linejoin="round" d="M497.9 142.1l-46.1 46.1c-4.7 4.7-12.3 4.7-17 0l-111-111c-4.7-4.7-4.7-12.3 0-17l46.1-46.1c18.700-18.700 49.100-18.700 67.900 0l60.100 60.100c18.800 18.700 18.800 49.100 0 67.900zM284.200 99.800L21.600 362.400.400 483.900c-2.900 16.400 11.400 30.600 27.800 27.800l121.500-21.300 262.600-262.600c4.700-4.700 4.700-12.300 0-17l-111-111c-4.800-4.700-12.400-4.700-17.100 0zM124.100 339.900c-5.500-5.500-5.500-14.300 0-19.800l154-154c5.500-5.500 14.300-5.500 19.800 0s5.500 14.300 0 19.800l-154 154c-5.500 5.500-14.300 5.500-19.800 0zM88 424h48v36.300l-64.500 11.300-31.100-31.100L51.700 376H88v48z"/>
<path transform="translate(257.87 352.20) scale(0.01607 0.01621)" fill="#3c3c3c" stroke="#3c3c3c" stroke-width="14" stroke-linejoin="round" d="M32 464a48 48 0 0 0 48 48h288a48 48 0 0 0 48-48V128H32zm272-256a16 16 0 0 1 32 0v224a16 16 0 0 1-32 0zm-96 0a16 16 0 0 1 32 0v224a16 16 0 0 1-32 0zm-96 0a16 16 0 0 1 32 0v224a16 16 0 0 1-32 0zM432 32H312l-9.400-18.700A24 24 0 0 0 281.100 0H166.800a23.720 23.720 0 0 0-21.400 13.300L136 32H16A16 16 0 0 0 0 48v32a16 16 0 0 0 16 16h416a16 16 0 0 0 16-16V48a16 16 0 0 0-16-16z"/>
<rect x="218.37" y="365.10" width="51.7" height="11.5" rx="1.1" fill="#fff" stroke="#939393" stroke-width="0.62"/>
<rect x="279.04" y="310.60" width="52.70" height="52.40" rx="1.3" fill="#fff" stroke="#e4e4e4" stroke-width="0.7"/>
<rect x="291.89" y="323.50" width="27" height="27" fill="url(#g6)"/>
<path transform="translate(284.44 352.20) scale(0.01621 0.01621)" fill="#3c3c3c" stroke="#3c3c3c" stroke-width="34" stroke-linejoin="round" d="M497.9 142.1l-46.1 46.1c-4.7 4.7-12.3 4.7-17 0l-111-111c-4.7-4.7-4.7-12.3 0-17l46.1-46.1c18.700-18.700 49.100-18.700 67.900 0l60.100 60.100c18.800 18.700 18.800 49.100 0 67.900zM284.200 99.800L21.600 362.400.400 483.900c-2.900 16.400 11.400 30.600 27.800 27.800l121.500-21.300 262.600-262.600c4.700-4.700 4.700-12.300 0-17l-111-111c-4.800-4.700-12.400-4.700-17.100 0zM124.100 339.900c-5.500-5.500-5.500-14.300 0-19.800l154-154c5.500-5.500 14.300-5.500 19.800 0s5.500 14.300 0 19.800l-154 154c-5.500 5.500-14.300 5.500-19.800 0zM88 424h48v36.300l-64.500 11.300-31.100-31.100L51.700 376H88v48z"/>
<path transform="translate(319.04 352.20) scale(0.01607 0.01621)" fill="#3c3c3c" stroke="#3c3c3c" stroke-width="14" stroke-linejoin="round" d="M32 464a48 48 0 0 0 48 48h288a48 48 0 0 0 48-48V128H32zm272-256a16 16 0 0 1 32 0v224a16 16 0 0 1-32 0zm-96 0a16 16 0 0 1 32 0v224a16 16 0 0 1-32 0zm-96 0a16 16 0 0 1 32 0v224a16 16 0 0 1-32 0zM432 32H312l-9.400-18.700A24 24 0 0 0 281.100 0H166.800a23.720 23.720 0 0 0-21.400 13.300L136 32H16A16 16 0 0 0 0 48v32a16 16 0 0 0 16 16h416a16 16 0 0 0 16-16V48a16 16 0 0 0-16-16z"/>
<rect x="279.54" y="365.10" width="51.7" height="11.5" rx="1.1" fill="#fff" stroke="#939393" stroke-width="0.62"/>
<rect x="340.21" y="310.60" width="52.70" height="52.40" rx="1.3" fill="#fff" stroke="#e4e4e4" stroke-width="0.7"/>
<rect x="353.06" y="323.50" width="27" height="27" fill="#102840"/>
<path transform="translate(345.61 352.20) scale(0.01621 0.01621)" fill="#3c3c3c" stroke="#3c3c3c" stroke-width="34" stroke-linejoin="round" d="M497.9 142.1l-46.1 46.1c-4.7 4.7-12.3 4.7-17 0l-111-111c-4.7-4.7-4.7-12.3 0-17l46.1-46.1c18.700-18.700 49.100-18.700 67.900 0l60.100 60.100c18.800 18.700 18.800 49.100 0 67.900zM284.200 99.800L21.600 362.400.400 483.900c-2.900 16.400 11.400 30.600 27.800 27.800l121.500-21.300 262.600-262.600c4.700-4.700 4.700-12.300 0-17l-111-111c-4.800-4.700-12.400-4.700-17.100 0zM124.100 339.900c-5.500-5.500-5.500-14.300 0-19.800l154-154c5.500-5.500 14.300-5.500 19.800 0s5.500 14.300 0 19.800l-154 154c-5.500 5.500-14.300 5.500-19.800 0zM88 424h48v36.300l-64.500 11.300-31.100-31.100L51.700 376H88v48z"/>
<path transform="translate(380.21 352.20) scale(0.01607 0.01621)" fill="#3c3c3c" stroke="#3c3c3c" stroke-width="14" stroke-linejoin="round" d="M32 464a48 48 0 0 0 48 48h288a48 48 0 0 0 48-48V128H32zm272-256a16 16 0 0 1 32 0v224a16 16 0 0 1-32 0zm-96 0a16 16 0 0 1 32 0v224a16 16 0 0 1-32 0zm-96 0a16 16 0 0 1 32 0v224a16 16 0 0 1-32 0zM432 32H312l-9.400-18.700A24 24 0 0 0 281.100 0H166.800a23.720 23.720 0 0 0-21.400 13.300L136 32H16A16 16 0 0 0 0 48v32a16 16 0 0 0 16 16h416a16 16 0 0 0 16-16V48a16 16 0 0 0-16-16z"/>
<rect x="340.71" y="365.10" width="51.7" height="11.5" rx="1.1" fill="#fff" stroke="#939393" stroke-width="0.62"/>
<rect x="401.38" y="310.60" width="52.70" height="52.40" rx="1.3" fill="#fff" stroke="#e4e4e4" stroke-width="0.7"/>
<rect x="414.23" y="323.50" width="27" height="27" fill="#222a40"/>
<path transform="translate(406.78 352.20) scale(0.01621 0.01621)" fill="#3c3c3c" stroke="#3c3c3c" stroke-width="34" stroke-linejoin="round" d="M497.9 142.1l-46.1 46.1c-4.7 4.7-12.3 4.7-17 0l-111-111c-4.7-4.7-4.7-12.3 0-17l46.1-46.1c18.700-18.700 49.100-18.700 67.900 0l60.100 60.100c18.800 18.700 18.800 49.100 0 67.900zM284.200 99.800L21.600 362.400.400 483.900c-2.900 16.400 11.400 30.600 27.800 27.800l121.500-21.300 262.600-262.600c4.700-4.700 4.700-12.300 0-17l-111-111c-4.800-4.700-12.400-4.700-17.100 0zM124.100 339.900c-5.500-5.500-5.500-14.300 0-19.800l154-154c5.500-5.500 14.300-5.500 19.800 0s5.500 14.300 0 19.800l-154 154c-5.500 5.500-14.300 5.500-19.800 0zM88 424h48v36.300l-64.500 11.300-31.100-31.100L51.700 376H88v48z"/>
<path transform="translate(441.38 352.20) scale(0.01607 0.01621)" fill="#3c3c3c" stroke="#3c3c3c" stroke-width="14" stroke-linejoin="round" d="M32 464a48 48 0 0 0 48 48h288a48 48 0 0 0 48-48V128H32zm272-256a16 16 0 0 1 32 0v224a16 16 0 0 1-32 0zm-96 0a16 16 0 0 1 32 0v224a16 16 0 0 1-32 0zm-96 0a16 16 0 0 1 32 0v224a16 16 0 0 1-32 0zM432 32H312l-9.400-18.700A24 24 0 0 0 281.100 0H166.800a23.720 23.720 0 0 0-21.400 13.300L136 32H16A16 16 0 0 0 0 48v32a16 16 0 0 0 16 16h416a16 16 0 0 0 16-16V48a16 16 0 0 0-16-16z"/>
<rect x="401.88" y="365.10" width="51.7" height="11.5" rx="1.1" fill="#fff" stroke="#939393" stroke-width="0.62"/>
<rect x="462.55" y="310.60" width="52.70" height="52.40" rx="1.3" fill="#fff" stroke="#e4e4e4" stroke-width="0.7"/>
<rect x="475.40" y="330.60" width="27" height="12.8" fill="#28304a"/>
<path transform="translate(467.95 352.20) scale(0.01621 0.01621)" fill="#3c3c3c" stroke="#3c3c3c" stroke-width="34" stroke-linejoin="round" d="M497.9 142.1l-46.1 46.1c-4.7 4.7-12.3 4.7-17 0l-111-111c-4.7-4.7-4.7-12.3 0-17l46.1-46.1c18.700-18.700 49.100-18.700 67.900 0l60.100 60.100c18.800 18.700 18.800 49.100 0 67.900zM284.200 99.800L21.600 362.400.400 483.900c-2.900 16.400 11.400 30.600 27.800 27.800l121.500-21.300 262.600-262.600c4.700-4.700 4.700-12.300 0-17l-111-111c-4.800-4.700-12.400-4.700-17.100 0zM124.100 339.900c-5.500-5.500-5.500-14.300 0-19.800l154-154c5.500-5.500 14.300-5.500 19.800 0s5.500 14.300 0 19.800l-154 154c-5.500 5.500-14.300 5.500-19.800 0zM88 424h48v36.300l-64.500 11.300-31.100-31.100L51.700 376H88v48z"/>
<path transform="translate(502.55 352.20) scale(0.01607 0.01621)" fill="#3c3c3c" stroke="#3c3c3c" stroke-width="14" stroke-linejoin="round" d="M32 464a48 48 0 0 0 48 48h288a48 48 0 0 0 48-48V128H32zm272-256a16 16 0 0 1 32 0v224a16 16 0 0 1-32 0zm-96 0a16 16 0 0 1 32 0v224a16 16 0 0 1-32 0zm-96 0a16 16 0 0 1 32 0v224a16 16 0 0 1-32 0zM432 32H312l-9.400-18.700A24 24 0 0 0 281.100 0H166.800a23.720 23.720 0 0 0-21.400 13.300L136 32H16A16 16 0 0 0 0 48v32a16 16 0 0 0 16 16h416a16 16 0 0 0 16-16V48a16 16 0 0 0-16-16z"/>
<rect x="463.05" y="365.10" width="51.7" height="11.5" rx="1.1" fill="#fff" stroke="#939393" stroke-width="0.62"/>
<rect x="523.72" y="310.60" width="52.70" height="52.40" rx="1.3" fill="#fff" stroke="#e4e4e4" stroke-width="0.7"/>
<rect x="536.57" y="323.50" width="27" height="27" fill="#3c4c6c"/>
<path transform="translate(529.12 352.20) scale(0.01621 0.01621)" fill="#3c3c3c" stroke="#3c3c3c" stroke-width="34" stroke-linejoin="round" d="M497.9 142.1l-46.1 46.1c-4.7 4.7-12.3 4.7-17 0l-111-111c-4.7-4.7-4.7-12.3 0-17l46.1-46.1c18.700-18.700 49.100-18.700 67.900 0l60.100 60.100c18.800 18.700 18.800 49.100 0 67.900zM284.200 99.800L21.600 362.400.400 483.900c-2.900 16.400 11.400 30.600 27.800 27.800l121.500-21.300 262.600-262.600c4.700-4.700 4.700-12.300 0-17l-111-111c-4.800-4.700-12.400-4.700-17.100 0zM124.100 339.900c-5.500-5.500-5.500-14.300 0-19.800l154-154c5.500-5.500 14.300-5.500 19.800 0s5.500 14.300 0 19.800l-154 154c-5.500 5.500-14.300 5.500-19.800 0zM88 424h48v36.300l-64.500 11.300-31.100-31.100L51.700 376H88v48z"/>
<path transform="translate(563.72 352.20) scale(0.01607 0.01621)" fill="#3c3c3c" stroke="#3c3c3c" stroke-width="14" stroke-linejoin="round" d="M32 464a48 48 0 0 0 48 48h288a48 48 0 0 0 48-48V128H32zm272-256a16 16 0 0 1 32 0v224a16 16 0 0 1-32 0zm-96 0a16 16 0 0 1 32 0v224a16 16 0 0 1-32 0zm-96 0a16 16 0 0 1 32 0v224a16 16 0 0 1-32 0zM432 32H312l-9.400-18.700A24 24 0 0 0 281.100 0H166.800a23.720 23.720 0 0 0-21.400 13.300L136 32H16A16 16 0 0 0 0 48v32a16 16 0 0 0 16 16h416a16 16 0 0 0 16-16V48a16 16 0 0 0-16-16z"/>
<rect x="524.22" y="365.10" width="51.7" height="11.5" rx="1.1" fill="#fff" stroke="#939393" stroke-width="0.62"/>
<rect x="584.89" y="310.60" width="52.70" height="52.40" rx="1.3" fill="#fff" stroke="#e4e4e4" stroke-width="0.7"/>
<rect x="602.09" y="323.50" width="18.3" height="27" fill="#4c6080"/>
<path transform="translate(590.29 352.20) scale(0.01621 0.01621)" fill="#3c3c3c" stroke="#3c3c3c" stroke-width="34" stroke-linejoin="round" d="M497.9 142.1l-46.1 46.1c-4.7 4.7-12.3 4.7-17 0l-111-111c-4.7-4.7-4.7-12.3 0-17l46.1-46.1c18.700-18.700 49.100-18.700 67.900 0l60.100 60.100c18.800 18.700 18.800 49.100 0 67.900zM284.200 99.800L21.600 362.400.400 483.900c-2.900 16.400 11.400 30.600 27.800 27.800l121.500-21.300 262.600-262.600c4.700-4.700 4.700-12.300 0-17l-111-111c-4.800-4.700-12.400-4.700-17.100 0zM124.100 339.900c-5.500-5.500-5.500-14.300 0-19.800l154-154c5.500-5.500 14.300-5.500 19.800 0s5.500 14.300 0 19.800l-154 154c-5.500 5.500-14.300 5.500-19.800 0zM88 424h48v36.300l-64.500 11.300-31.100-31.100L51.700 376H88v48z"/>
<path transform="translate(624.89 352.20) scale(0.01607 0.01621)" fill="#3c3c3c" stroke="#3c3c3c" stroke-width="14" stroke-linejoin="round" d="M32 464a48 48 0 0 0 48 48h288a48 48 0 0 0 48-48V128H32zm272-256a16 16 0 0 1 32 0v224a16 16 0 0 1-32 0zm-96 0a16 16 0 0 1 32 0v224a16 16 0 0 1-32 0zm-96 0a16 16 0 0 1 32 0v224a16 16 0 0 1-32 0zM432 32H312l-9.400-18.700A24 24 0 0 0 281.100 0H166.800a23.720 23.720 0 0 0-21.400 13.300L136 32H16A16 16 0 0 0 0 48v32a16 16 0 0 0 16 16h416a16 16 0 0 0 16-16V48a16 16 0 0 0-16-16z"/>
<rect x="585.39" y="365.10" width="51.7" height="11.5" rx="1.1" fill="#fff" stroke="#939393" stroke-width="0.62"/>
<rect x="646.06" y="310.60" width="52.70" height="52.40" rx="1.3" fill="#fff" stroke="#e4e4e4" stroke-width="0.7"/>
<rect x="663.26" y="323.50" width="18.3" height="27" fill="#48606c"/>
<path transform="translate(651.46 352.20) scale(0.01621 0.01621)" fill="#3c3c3c" stroke="#3c3c3c" stroke-width="34" stroke-linejoin="round" d="M497.9 142.1l-46.1 46.1c-4.7 4.7-12.3 4.7-17 0l-111-111c-4.7-4.7-4.7-12.3 0-17l46.1-46.1c18.700-18.700 49.100-18.700 67.900 0l60.100 60.100c18.800 18.700 18.800 49.100 0 67.900zM284.200 99.800L21.600 362.400.400 483.900c-2.900 16.400 11.400 30.600 27.800 27.800l121.500-21.300 262.600-262.600c4.700-4.700 4.700-12.300 0-17l-111-111c-4.800-4.700-12.400-4.700-17.100 0zM124.100 339.900c-5.500-5.500-5.500-14.300 0-19.800l154-154c5.500-5.500 14.300-5.500 19.800 0s5.500 14.300 0 19.800l-154 154c-5.500 5.500-14.300 5.500-19.800 0zM88 424h48v36.300l-64.500 11.300-31.100-31.100L51.700 376H88v48z"/>
<path transform="translate(686.06 352.20) scale(0.01607 0.01621)" fill="#3c3c3c" stroke="#3c3c3c" stroke-width="14" stroke-linejoin="round" d="M32 464a48 48 0 0 0 48 48h288a48 48 0 0 0 48-48V128H32zm272-256a16 16 0 0 1 32 0v224a16 16 0 0 1-32 0zm-96 0a16 16 0 0 1 32 0v224a16 16 0 0 1-32 0zm-96 0a16 16 0 0 1 32 0v224a16 16 0 0 1-32 0zM432 32H312l-9.400-18.700A24 24 0 0 0 281.100 0H166.800a23.720 23.720 0 0 0-21.400 13.300L136 32H16A16 16 0 0 0 0 48v32a16 16 0 0 0 16 16h416a16 16 0 0 0 16-16V48a16 16 0 0 0-16-16z"/>
<rect x="646.56" y="365.10" width="51.7" height="11.5" rx="1.1" fill="#fff" stroke="#939393" stroke-width="0.62"/>
<rect x="707.23" y="310.60" width="52.70" height="52.40" rx="1.3" fill="#fff" stroke="#e4e4e4" stroke-width="0.7"/>
<rect x="724.43" y="323.50" width="18.3" height="27" fill="#2c3844"/>
<path transform="translate(712.63 352.20) scale(0.01621 0.01621)" fill="#3c3c3c" stroke="#3c3c3c" stroke-width="34" stroke-linejoin="round" d="M497.9 142.1l-46.1 46.1c-4.7 4.7-12.3 4.7-17 0l-111-111c-4.7-4.7-4.7-12.3 0-17l46.1-46.1c18.700-18.700 49.100-18.700 67.900 0l60.100 60.100c18.800 18.700 18.800 49.100 0 67.900zM284.200 99.800L21.600 362.400.400 483.900c-2.900 16.400 11.400 30.600 27.800 27.800l121.500-21.300 262.600-262.600c4.700-4.700 4.700-12.300 0-17l-111-111c-4.800-4.700-12.400-4.700-17.100 0zM124.100 339.900c-5.500-5.500-5.500-14.300 0-19.800l154-154c5.500-5.500 14.300-5.500 19.800 0s5.500 14.300 0 19.800l-154 154c-5.500 5.500-14.300 5.500-19.800 0zM88 424h48v36.300l-64.500 11.300-31.100-31.100L51.700 376H88v48z"/>
<path transform="translate(747.23 352.20) scale(0.01607 0.01621)" fill="#3c3c3c" stroke="#3c3c3c" stroke-width="14" stroke-linejoin="round" d="M32 464a48 48 0 0 0 48 48h288a48 48 0 0 0 48-48V128H32zm272-256a16 16 0 0 1 32 0v224a16 16 0 0 1-32 0zm-96 0a16 16 0 0 1 32 0v224a16 16 0 0 1-32 0zm-96 0a16 16 0 0 1 32 0v224a16 16 0 0 1-32 0zM432 32H312l-9.400-18.700A24 24 0 0 0 281.100 0H166.800a23.720 23.720 0 0 0-21.400 13.300L136 32H16A16 16 0 0 0 0 48v32a16 16 0 0 0 16 16h416a16 16 0 0 0 16-16V48a16 16 0 0 0-16-16z"/>
<rect x="707.73" y="365.10" width="51.7" height="11.5" rx="1.1" fill="#fff" stroke="#939393" stroke-width="0.62"/>
<rect x="768.40" y="310.60" width="52.70" height="52.40" rx="1.3" fill="#fff" stroke="#e4e4e4" stroke-width="0.7"/>
<rect x="781.25" y="330.60" width="27" height="12.8" fill="#507898"/>
<path transform="translate(773.80 352.20) scale(0.01621 0.01621)" fill="#3c3c3c" stroke="#3c3c3c" stroke-width="34" stroke-linejoin="round" d="M497.9 142.1l-46.1 46.1c-4.7 4.7-12.3 4.7-17 0l-111-111c-4.7-4.7-4.7-12.3 0-17l46.1-46.1c18.700-18.700 49.100-18.700 67.900 0l60.100 60.100c18.800 18.700 18.800 49.100 0 67.900zM284.200 99.800L21.600 362.400.400 483.900c-2.900 16.400 11.400 30.600 27.800 27.800l121.500-21.300 262.600-262.600c4.700-4.700 4.700-12.300 0-17l-111-111c-4.800-4.700-12.400-4.700-17.100 0zM124.100 339.900c-5.500-5.500-5.500-14.300 0-19.800l154-154c5.500-5.500 14.300-5.500 19.800 0s5.500 14.300 0 19.800l-154 154c-5.500 5.500-14.300 5.500-19.800 0zM88 424h48v36.300l-64.500 11.300-31.100-31.100L51.700 376H88v48z"/>
<path transform="translate(808.40 352.20) scale(0.01607 0.01621)" fill="#3c3c3c" stroke="#3c3c3c" stroke-width="14" stroke-linejoin="round" d="M32 464a48 48 0 0 0 48 48h288a48 48 0 0 0 48-48V128H32zm272-256a16 16 0 0 1 32 0v224a16 16 0 0 1-32 0zm-96 0a16 16 0 0 1 32 0v224a16 16 0 0 1-32 0zm-96 0a16 16 0 0 1 32 0v224a16 16 0 0 1-32 0zM432 32H312l-9.400-18.700A24 24 0 0 0 281.100 0H166.800a23.720 23.720 0 0 0-21.400 13.300L136 32H16A16 16 0 0 0 0 48v32a16 16 0 0 0 16 16h416a16 16 0 0 0 16-16V48a16 16 0 0 0-16-16z"/>
<rect x="768.90" y="365.10" width="51.7" height="11.5" rx="1.1" fill="#fff" stroke="#939393" stroke-width="0.62"/>
<rect x="829.57" y="310.60" width="52.70" height="52.40" rx="1.3" fill="#fff" stroke="#e4e4e4" stroke-width="0.7"/>
<rect x="846.77" y="323.50" width="18.3" height="27" fill="#5c7486"/>
<path transform="translate(834.97 352.20) scale(0.01621 0.01621)" fill="#3c3c3c" stroke="#3c3c3c" stroke-width="34" stroke-linejoin="round" d="M497.9 142.1l-46.1 46.1c-4.7 4.7-12.3 4.7-17 0l-111-111c-4.7-4.7-4.7-12.3 0-17l46.1-46.1c18.700-18.700 49.100-18.700 67.900 0l60.100 60.100c18.800 18.700 18.800 49.100 0 67.900zM284.200 99.800L21.600 362.400.400 483.900c-2.900 16.400 11.400 30.600 27.800 27.800l121.500-21.300 262.600-262.600c4.700-4.700 4.700-12.300 0-17l-111-111c-4.800-4.700-12.400-4.700-17.100 0zM124.100 339.900c-5.500-5.500-5.500-14.300 0-19.800l154-154c5.500-5.500 14.300-5.500 19.800 0s5.500 14.300 0 19.800l-154 154c-5.500 5.500-14.300 5.500-19.800 0zM88 424h48v36.300l-64.500 11.300-31.100-31.100L51.700 376H88v48z"/>
<path transform="translate(869.57 352.20) scale(0.01607 0.01621)" fill="#3c3c3c" stroke="#3c3c3c" stroke-width="14" stroke-linejoin="round" d="M32 464a48 48 0 0 0 48 48h288a48 48 0 0 0 48-48V128H32zm272-256a16 16 0 0 1 32 0v224a16 16 0 0 1-32 0zm-96 0a16 16 0 0 1 32 0v224a16 16 0 0 1-32 0zm-96 0a16 16 0 0 1 32 0v224a16 16 0 0 1-32 0zM432 32H312l-9.400-18.700A24 24 0 0 0 281.100 0H166.800a23.720 23.720 0 0 0-21.400 13.300L136 32H16A16 16 0 0 0 0 48v32a16 16 0 0 0 16 16h416a16 16 0 0 0 16-16V48a16 16 0 0 0-16-16z"/>
<rect x="830.07" y="365.10" width="51.7" height="11.5" rx="1.1" fill="#fff" stroke="#939393" stroke-width="0.62"/>
<rect x="890.74" y="310.60" width="52.70" height="52.40" rx="1.3" fill="#fff" stroke="#e4e4e4" stroke-width="0.7"/>
<rect x="907.94" y="323.50" width="18.3" height="27" fill="url(#g7)"/>
<path transform="translate(896.14 352.20) scale(0.01621 0.01621)" fill="#3c3c3c" stroke="#3c3c3c" stroke-width="34" stroke-linejoin="round" d="M497.9 142.1l-46.1 46.1c-4.7 4.7-12.3 4.7-17 0l-111-111c-4.7-4.7-4.7-12.3 0-17l46.1-46.1c18.700-18.700 49.100-18.700 67.900 0l60.100 60.100c18.800 18.700 18.800 49.100 0 67.900zM284.200 99.800L21.600 362.400.400 483.900c-2.900 16.400 11.400 30.600 27.800 27.800l121.500-21.300 262.600-262.600c4.700-4.700 4.700-12.300 0-17l-111-111c-4.800-4.700-12.400-4.700-17.100 0zM124.100 339.900c-5.500-5.500-5.500-14.300 0-19.800l154-154c5.500-5.500 14.300-5.500 19.800 0s5.500 14.300 0 19.800l-154 154c-5.500 5.500-14.300 5.500-19.800 0zM88 424h48v36.300l-64.500 11.300-31.100-31.100L51.700 376H88v48z"/>
<path transform="translate(930.74 352.20) scale(0.01607 0.01621)" fill="#3c3c3c" stroke="#3c3c3c" stroke-width="14" stroke-linejoin="round" d="M32 464a48 48 0 0 0 48 48h288a48 48 0 0 0 48-48V128H32zm272-256a16 16 0 0 1 32 0v224a16 16 0 0 1-32 0zm-96 0a16 16 0 0 1 32 0v224a16 16 0 0 1-32 0zm-96 0a16 16 0 0 1 32 0v224a16 16 0 0 1-32 0zM432 32H312l-9.400-18.700A24 24 0 0 0 281.100 0H166.800a23.720 23.720 0 0 0-21.400 13.300L136 32H16A16 16 0 0 0 0 48v32a16 16 0 0 0 16 16h416a16 16 0 0 0 16-16V48a16 16 0 0 0-16-16z"/>
<rect x="891.24" y="365.10" width="51.7" height="11.5" rx="1.1" fill="#fff" stroke="#939393" stroke-width="0.62"/>
<rect x="156.70" y="380.20" width="52.70" height="52.40" rx="1.3" fill="#fff" stroke="#e4e4e4" stroke-width="0.7"/>
<rect x="173.90" y="393.10" width="18.3" height="27" fill="#6c8480"/>
<path transform="translate(162.10 421.80) scale(0.01621 0.01621)" fill="#3c3c3c" stroke="#3c3c3c" stroke-width="34" stroke-linejoin="round" d="M497.9 142.1l-46.1 46.1c-4.7 4.7-12.3 4.7-17 0l-111-111c-4.7-4.7-4.7-12.3 0-17l46.1-46.1c18.700-18.700 49.100-18.700 67.900 0l60.100 60.100c18.800 18.700 18.800 49.100 0 67.900zM284.200 99.800L21.600 362.400.400 483.900c-2.900 16.400 11.400 30.600 27.800 27.800l121.500-21.300 262.600-262.600c4.700-4.700 4.700-12.300 0-17l-111-111c-4.800-4.700-12.400-4.700-17.100 0zM124.100 339.900c-5.500-5.500-5.500-14.300 0-19.800l154-154c5.500-5.500 14.300-5.500 19.800 0s5.500 14.300 0 19.800l-154 154c-5.500 5.500-14.300 5.500-19.800 0zM88 424h48v36.300l-64.500 11.300-31.100-31.100L51.700 376H88v48z"/>
<path transform="translate(196.70 421.80) scale(0.01607 0.01621)" fill="#3c3c3c" stroke="#3c3c3c" stroke-width="14" stroke-linejoin="round" d="M32 464a48 48 0 0 0 48 48h288a48 48 0 0 0 48-48V128H32zm272-256a16 16 0 0 1 32 0v224a16 16 0 0 1-32 0zm-96 0a16 16 0 0 1 32 0v224a16 16 0 0 1-32 0zm-96 0a16 16 0 0 1 32 0v224a16 16 0 0 1-32 0zM432 32H312l-9.400-18.700A24 24 0 0 0 281.100 0H166.800a23.720 23.720 0 0 0-21.400 13.300L136 32H16A16 16 0 0 0 0 48v32a16 16 0 0 0 16 16h416a16 16 0 0 0 16-16V48a16 16 0 0 0-16-16z"/>
<rect x="157.20" y="434.70" width="51.7" height="11.5" rx="1.1" fill="#fff" stroke="#939393" stroke-width="0.62"/>
<rect x="217.87" y="380.20" width="52.70" height="52.40" rx="1.3" fill="#fff" stroke="#e4e4e4" stroke-width="0.7"/>
<rect x="235.07" y="393.10" width="18.3" height="27" fill="#34443a"/>
<path transform="translate(223.27 421.80) scale(0.01621 0.01621)" fill="#3c3c3c" stroke="#3c3c3c" stroke-width="34" stroke-linejoin="round" d="M497.9 142.1l-46.1 46.1c-4.7 4.7-12.3 4.7-17 0l-111-111c-4.7-4.7-4.7-12.3 0-17l46.1-46.1c18.700-18.700 49.100-18.700 67.900 0l60.100 60.100c18.800 18.700 18.800 49.100 0 67.900zM284.200 99.800L21.600 362.400.400 483.900c-2.900 16.400 11.400 30.600 27.800 27.800l121.500-21.300 262.600-262.600c4.700-4.700 4.700-12.300 0-17l-111-111c-4.800-4.700-12.400-4.700-17.100 0zM124.100 339.900c-5.500-5.500-5.500-14.300 0-19.800l154-154c5.500-5.500 14.300-5.500 19.800 0s5.500 14.300 0 19.800l-154 154c-5.500 5.500-14.300 5.500-19.800 0zM88 424h48v36.300l-64.500 11.300-31.100-31.100L51.700 376H88v48z"/>
<path transform="translate(257.87 421.80) scale(0.01607 0.01621)" fill="#3c3c3c" stroke="#3c3c3c" stroke-width="14" stroke-linejoin="round" d="M32 464a48 48 0 0 0 48 48h288a48 48 0 0 0 48-48V128H32zm272-256a16 16 0 0 1 32 0v224a16 16 0 0 1-32 0zm-96 0a16 16 0 0 1 32 0v224a16 16 0 0 1-32 0zm-96 0a16 16 0 0 1 32 0v224a16 16 0 0 1-32 0zM432 32H312l-9.400-18.700A24 24 0 0 0 281.100 0H166.800a23.720 23.720 0 0 0-21.400 13.300L136 32H16A16 16 0 0 0 0 48v32a16 16 0 0 0 16 16h416a16 16 0 0 0 16-16V48a16 16 0 0 0-16-16z"/>
<rect x="218.37" y="434.70" width="51.7" height="11.5" rx="1.1" fill="#fff" stroke="#939393" stroke-width="0.62"/>
<rect x="279.04" y="380.20" width="52.70" height="52.40" rx="1.3" fill="#fff" stroke="#e4e4e4" stroke-width="0.7"/>
<rect x="291.89" y="393.10" width="27" height="27" fill="#1c3024"/>
<path transform="translate(284.44 421.80) scale(0.01621 0.01621)" fill="#3c3c3c" stroke="#3c3c3c" stroke-width="34" stroke-linejoin="round" d="M497.9 142.1l-46.1 46.1c-4.7 4.7-12.3 4.7-17 0l-111-111c-4.7-4.7-4.7-12.3 0-17l46.1-46.1c18.700-18.700 49.100-18.700 67.900 0l60.100 60.100c18.800 18.700 18.800 49.100 0 67.900zM284.200 99.800L21.600 362.400.400 483.900c-2.900 16.400 11.400 30.600 27.800 27.800l121.500-21.300 262.600-262.600c4.700-4.700 4.700-12.300 0-17l-111-111c-4.800-4.700-12.400-4.700-17.100 0zM124.100 339.900c-5.500-5.500-5.500-14.300 0-19.800l154-154c5.500-5.500 14.300-5.500 19.800 0s5.500 14.300 0 19.800l-154 154c-5.500 5.500-14.300 5.500-19.800 0zM88 424h48v36.300l-64.500 11.300-31.100-31.100L51.700 376H88v48z"/>
<path transform="translate(319.04 421.80) scale(0.01607 0.01621)" fill="#3c3c3c" stroke="#3c3c3c" stroke-width="14" stroke-linejoin="round" d="M32 464a48 48 0 0 0 48 48h288a48 48 0 0 0 48-48V128H32zm272-256a16 16 0 0 1 32 0v224a16 16 0 0 1-32 0zm-96 0a16 16 0 0 1 32 0v224a16 16 0 0 1-32 0zm-96 0a16 16 0 0 1 32 0v224a16 16 0 0 1-32 0zM432 32H312l-9.400-18.700A24 24 0 0 0 281.100 0H166.800a23.720 23.720 0 0 0-21.400 13.300L136 32H16A16 16 0 0 0 0 48v32a16 16 0 0 0 16 16h416a16 16 0 0 0 16-16V48a16 16 0 0 0-16-16z"/>
<rect x="279.54" y="434.70" width="51.7" height="11.5" rx="1.1" fill="#fff" stroke="#939393" stroke-width="0.62"/>
<rect x="340.21" y="380.20" width="52.70" height="52.40" rx="1.3" fill="#fff" stroke="#e4e4e4" stroke-width="0.7"/>
<rect x="353.06" y="393.10" width="27" height="27" fill="#1a3028"/>
<path transform="translate(345.61 421.80) scale(0.01621 0.01621)" fill="#3c3c3c" stroke="#3c3c3c" stroke-width="34" stroke-linejoin="round" d="M497.9 142.1l-46.1 46.1c-4.7 4.7-12.3 4.7-17 0l-111-111c-4.7-4.7-4.7-12.3 0-17l46.1-46.1c18.700-18.700 49.100-18.700 67.900 0l60.100 60.100c18.800 18.700 18.800 49.100 0 67.900zM284.200 99.800L21.600 362.400.400 483.900c-2.900 16.400 11.400 30.600 27.800 27.800l121.500-21.300 262.600-262.600c4.700-4.700 4.700-12.300 0-17l-111-111c-4.800-4.700-12.400-4.700-17.100 0zM124.100 339.900c-5.500-5.500-5.500-14.300 0-19.800l154-154c5.500-5.500 14.300-5.500 19.800 0s5.500 14.300 0 19.800l-154 154c-5.500 5.500-14.300 5.500-19.800 0zM88 424h48v36.300l-64.500 11.300-31.100-31.100L51.700 376H88v48z"/>
<path transform="translate(380.21 421.80) scale(0.01607 0.01621)" fill="#3c3c3c" stroke="#3c3c3c" stroke-width="14" stroke-linejoin="round" d="M32 464a48 48 0 0 0 48 48h288a48 48 0 0 0 48-48V128H32zm272-256a16 16 0 0 1 32 0v224a16 16 0 0 1-32 0zm-96 0a16 16 0 0 1 32 0v224a16 16 0 0 1-32 0zm-96 0a16 16 0 0 1 32 0v224a16 16 0 0 1-32 0zM432 32H312l-9.400-18.700A24 24 0 0 0 281.100 0H166.800a23.720 23.720 0 0 0-21.400 13.300L136 32H16A16 16 0 0 0 0 48v32a16 16 0 0 0 16 16h416a16 16 0 0 0 16-16V48a16 16 0 0 0-16-16z"/>
<rect x="340.71" y="434.70" width="51.7" height="11.5" rx="1.1" fill="#fff" stroke="#939393" stroke-width="0.62"/>
<rect x="401.38" y="380.20" width="52.70" height="52.40" rx="1.3" fill="#fff" stroke="#e4e4e4" stroke-width="0.7"/>
<rect x="414.23" y="393.10" width="27" height="27" fill="#2c4434"/>
<path transform="translate(406.78 421.80) scale(0.01621 0.01621)" fill="#3c3c3c" stroke="#3c3c3c" stroke-width="34" stroke-linejoin="round" d="M497.9 142.1l-46.1 46.1c-4.7 4.7-12.3 4.7-17 0l-111-111c-4.7-4.7-4.7-12.3 0-17l46.1-46.1c18.700-18.700 49.100-18.700 67.900 0l60.100 60.100c18.800 18.700 18.800 49.100 0 67.900zM284.200 99.800L21.600 362.400.400 483.900c-2.900 16.400 11.400 30.600 27.800 27.800l121.500-21.300 262.600-262.600c4.700-4.700 4.700-12.300 0-17l-111-111c-4.800-4.700-12.400-4.700-17.100 0zM124.100 339.900c-5.500-5.500-5.500-14.300 0-19.800l154-154c5.500-5.500 14.300-5.500 19.800 0s5.500 14.300 0 19.800l-154 154c-5.500 5.500-14.300 5.500-19.800 0zM88 424h48v36.300l-64.500 11.300-31.100-31.100L51.700 376H88v48z"/>
<path transform="translate(441.38 421.80) scale(0.01607 0.01621)" fill="#3c3c3c" stroke="#3c3c3c" stroke-width="14" stroke-linejoin="round" d="M32 464a48 48 0 0 0 48 48h288a48 48 0 0 0 48-48V128H32zm272-256a16 16 0 0 1 32 0v224a16 16 0 0 1-32 0zm-96 0a16 16 0 0 1 32 0v224a16 16 0 0 1-32 0zm-96 0a16 16 0 0 1 32 0v224a16 16 0 0 1-32 0zM432 32H312l-9.400-18.700A24 24 0 0 0 281.100 0H166.800a23.720 23.720 0 0 0-21.400 13.300L136 32H16A16 16 0 0 0 0 48v32a16 16 0 0 0 16 16h416a16 16 0 0 0 16-16V48a16 16 0 0 0-16-16z"/>
<rect x="401.88" y="434.70" width="51.7" height="11.5" rx="1.1" fill="#fff" stroke="#939393" stroke-width="0.62"/>
<rect x="462.55" y="380.20" width="52.70" height="52.40" rx="1.3" fill="#fff" stroke="#e4e4e4" stroke-width="0.7"/>
<rect x="475.40" y="393.10" width="27" height="27" fill="#7c847c"/>
<path transform="translate(467.95 421.80) scale(0.01621 0.01621)" fill="#3c3c3c" stroke="#3c3c3c" stroke-width="34" stroke-linejoin="round" d="M497.9 142.1l-46.1 46.1c-4.7 4.7-12.3 4.7-17 0l-111-111c-4.7-4.7-4.7-12.3 0-17l46.1-46.1c18.700-18.700 49.100-18.700 67.900 0l60.100 60.100c18.800 18.700 18.800 49.100 0 67.900zM284.200 99.800L21.600 362.400.400 483.900c-2.900 16.400 11.400 30.600 27.800 27.800l121.500-21.300 262.600-262.600c4.700-4.700 4.700-12.300 0-17l-111-111c-4.800-4.700-12.400-4.700-17.100 0zM124.100 339.900c-5.500-5.500-5.500-14.300 0-19.800l154-154c5.500-5.500 14.300-5.500 19.800 0s5.500 14.300 0 19.800l-154 154c-5.500 5.500-14.300 5.500-19.800 0zM88 424h48v36.300l-64.500 11.300-31.100-31.100L51.700 376H88v48z"/>
<path transform="translate(502.55 421.80) scale(0.01607 0.01621)" fill="#3c3c3c" stroke="#3c3c3c" stroke-width="14" stroke-linejoin="round" d="M32 464a48 48 0 0 0 48 48h288a48 48 0 0 0 48-48V128H32zm272-256a16 16 0 0 1 32 0v224a16 16 0 0 1-32 0zm-96 0a16 16 0 0 1 32 0v224a16 16 0 0 1-32 0zm-96 0a16 16 0 0 1 32 0v224a16 16 0 0 1-32 0zM432 32H312l-9.400-18.700A24 24 0 0 0 281.100 0H166.800a23.720 23.720 0 0 0-21.400 13.300L136 32H16A16 16 0 0 0 0 48v32a16 16 0 0 0 16 16h416a16 16 0 0 0 16-16V48a16 16 0 0 0-16-16z"/>
<rect x="463.05" y="434.70" width="51.7" height="11.5" rx="1.1" fill="#fff" stroke="#939393" stroke-width="0.62"/>
<rect x="523.72" y="380.20" width="52.70" height="52.40" rx="1.3" fill="#fff" stroke="#e4e4e4" stroke-width="0.7"/>
<rect x="536.57" y="393.10" width="27" height="27" fill="#8c8c88"/>
<path transform="translate(529.12 421.80) scale(0.01621 0.01621)" fill="#3c3c3c" stroke="#3c3c3c" stroke-width="34" stroke-linejoin="round" d="M497.9 142.1l-46.1 46.1c-4.7 4.7-12.3 4.7-17 0l-111-111c-4.7-4.7-4.7-12.3 0-17l46.1-46.1c18.700-18.700 49.100-18.700 67.900 0l60.100 60.100c18.800 18.700 18.800 49.100 0 67.900zM284.200 99.800L21.600 362.400.400 483.900c-2.900 16.400 11.400 30.600 27.800 27.800l121.500-21.300 262.600-262.600c4.700-4.700 4.700-12.300 0-17l-111-111c-4.800-4.700-12.400-4.700-17.100 0zM124.100 339.900c-5.500-5.500-5.500-14.300 0-19.800l154-154c5.500-5.500 14.300-5.500 19.800 0s5.500 14.300 0 19.800l-154 154c-5.500 5.500-14.300 5.500-19.800 0zM88 424h48v36.300l-64.500 11.300-31.100-31.100L51.700 376H88v48z"/>
<path transform="translate(563.72 421.80) scale(0.01607 0.01621)" fill="#3c3c3c" stroke="#3c3c3c" stroke-width="14" stroke-linejoin="round" d="M32 464a48 48 0 0 0 48 48h288a48 48 0 0 0 48-48V128H32zm272-256a16 16 0 0 1 32 0v224a16 16 0 0 1-32 0zm-96 0a16 16 0 0 1 32 0v224a16 16 0 0 1-32 0zm-96 0a16 16 0 0 1 32 0v224a16 16 0 0 1-32 0zM432 32H312l-9.400-18.700A24 24 0 0 0 281.100 0H166.800a23.720 23.720 0 0 0-21.400 13.300L136 32H16A16 16 0 0 0 0 48v32a16 16 0 0 0 16 16h416a16 16 0 0 0 16-16V48a16 16 0 0 0-16-16z"/>
<rect x="524.22" y="434.70" width="51.7" height="11.5" rx="1.1" fill="#fff" stroke="#939393" stroke-width="0.62"/>
<rect x="584.89" y="380.20" width="52.70" height="52.40" rx="1.3" fill="#fff" stroke="#e4e4e4" stroke-width="0.7"/>
<rect x="597.74" y="393.10" width="27" height="27" fill="#b4c0b4"/>
<path transform="translate(590.29 421.80) scale(0.01621 0.01621)" fill="#3c3c3c" stroke="#3c3c3c" stroke-width="34" stroke-linejoin="round" d="M497.9 142.1l-46.1 46.1c-4.7 4.7-12.3 4.7-17 0l-111-111c-4.7-4.7-4.7-12.3 0-17l46.1-46.1c18.700-18.700 49.100-18.700 67.900 0l60.100 60.100c18.800 18.700 18.800 49.100 0 67.900zM284.200 99.800L21.600 362.400.400 483.900c-2.900 16.400 11.400 30.600 27.800 27.800l121.500-21.300 262.600-262.600c4.700-4.700 4.700-12.300 0-17l-111-111c-4.800-4.700-12.400-4.700-17.100 0zM124.100 339.900c-5.500-5.500-5.500-14.300 0-19.800l154-154c5.500-5.500 14.300-5.500 19.800 0s5.500 14.300 0 19.800l-154 154c-5.500 5.500-14.300 5.500-19.800 0zM88 424h48v36.300l-64.500 11.300-31.100-31.100L51.700 376H88v48z"/>
<path transform="translate(624.89 421.80) scale(0.01607 0.01621)" fill="#3c3c3c" stroke="#3c3c3c" stroke-width="14" stroke-linejoin="round" d="M32 464a48 48 0 0 0 48 48h288a48 48 0 0 0 48-48V128H32zm272-256a16 16 0 0 1 32 0v224a16 16 0 0 1-32 0zm-96 0a16 16 0 0 1 32 0v224a16 16 0 0 1-32 0zm-96 0a16 16 0 0 1 32 0v224a16 16 0 0 1-32 0zM432 32H312l-9.400-18.700A24 24 0 0 0 281.100 0H166.800a23.720 23.720 0 0 0-21.400 13.300L136 32H16A16 16 0 0 0 0 48v32a16 16 0 0 0 16 16h416a16 16 0 0 0 16-16V48a16 16 0 0 0-16-16z"/>
<rect x="585.39" y="434.70" width="51.7" height="11.5" rx="1.1" fill="#fff" stroke="#939393" stroke-width="0.62"/>
<rect x="646.06" y="380.20" width="52.70" height="52.40" rx="1.3" fill="#fff" stroke="#e4e4e4" stroke-width="0.7"/>
<rect x="663.26" y="393.10" width="18.3" height="27" fill="#7c8060"/>
<path transform="translate(651.46 421.80) scale(0.01621 0.01621)" fill="#3c3c3c" stroke="#3c3c3c" stroke-width="34" stroke-linejoin="round" d="M497.9 142.1l-46.1 46.1c-4.7 4.7-12.3 4.7-17 0l-111-111c-4.7-4.7-4.7-12.3 0-17l46.1-46.1c18.700-18.700 49.100-18.700 67.900 0l60.100 60.100c18.800 18.700 18.800 49.100 0 67.900zM284.200 99.800L21.600 362.400.400 483.900c-2.900 16.400 11.400 30.600 27.800 27.800l121.500-21.300 262.600-262.600c4.700-4.700 4.700-12.300 0-17l-111-111c-4.800-4.700-12.400-4.700-17.100 0zM124.100 339.900c-5.500-5.500-5.500-14.300 0-19.800l154-154c5.500-5.500 14.300-5.500 19.800 0s5.500 14.300 0 19.800l-154 154c-5.500 5.500-14.300 5.500-19.800 0zM88 424h48v36.300l-64.500 11.300-31.100-31.100L51.700 376H88v48z"/>
<path transform="translate(686.06 421.80) scale(0.01607 0.01621)" fill="#3c3c3c" stroke="#3c3c3c" stroke-width="14" stroke-linejoin="round" d="M32 464a48 48 0 0 0 48 48h288a48 48 0 0 0 48-48V128H32zm272-256a16 16 0 0 1 32 0v224a16 16 0 0 1-32 0zm-96 0a16 16 0 0 1 32 0v224a16 16 0 0 1-32 0zm-96 0a16 16 0 0 1 32 0v224a16 16 0 0 1-32 0zM432 32H312l-9.400-18.700A24 24 0 0 0 281.100 0H166.800a23.720 23.720 0 0 0-21.400 13.300L136 32H16A16 16 0 0 0 0 48v32a16 16 0 0 0 16 16h416a16 16 0 0 0 16-16V48a16 16 0 0 0-16-16z"/>
<rect x="646.56" y="434.70" width="51.7" height="11.5" rx="1.1" fill="#fff" stroke="#939393" stroke-width="0.62"/>
<rect x="707.23" y="380.20" width="52.70" height="52.40" rx="1.3" fill="#fff" stroke="#e4e4e4" stroke-width="0.7"/>
<rect x="724.43" y="393.10" width="18.3" height="27" fill="#6c7458"/>
<path transform="translate(712.63 421.80) scale(0.01621 0.01621)" fill="#3c3c3c" stroke="#3c3c3c" stroke-width="34" stroke-linejoin="round" d="M497.9 142.1l-46.1 46.1c-4.7 4.7-12.3 4.7-17 0l-111-111c-4.7-4.7-4.7-12.3 0-17l46.1-46.1c18.700-18.700 49.100-18.700 67.900 0l60.100 60.100c18.800 18.700 18.800 49.100 0 67.900zM284.200 99.800L21.600 362.400.400 483.900c-2.900 16.400 11.400 30.600 27.800 27.800l121.500-21.300 262.600-262.600c4.700-4.700 4.700-12.300 0-17l-111-111c-4.800-4.700-12.400-4.700-17.100 0zM124.100 339.900c-5.500-5.500-5.500-14.300 0-19.800l154-154c5.500-5.500 14.300-5.500 19.800 0s5.500 14.300 0 19.800l-154 154c-5.500 5.500-14.300 5.500-19.800 0zM88 424h48v36.300l-64.500 11.300-31.100-31.100L51.700 376H88v48z"/>
<path transform="translate(747.23 421.80) scale(0.01607 0.01621)" fill="#3c3c3c" stroke="#3c3c3c" stroke-width="14" stroke-linejoin="round" d="M32 464a48 48 0 0 0 48 48h288a48 48 0 0 0 48-48V128H32zm272-256a16 16 0 0 1 32 0v224a16 16 0 0 1-32 0zm-96 0a16 16 0 0 1 32 0v224a16 16 0 0 1-32 0zm-96 0a16 16 0 0 1 32 0v224a16 16 0 0 1-32 0zM432 32H312l-9.400-18.700A24 24 0 0 0 281.100 0H166.800a23.720 23.720 0 0 0-21.400 13.300L136 32H16A16 16 0 0 0 0 48v32a16 16 0 0 0 16 16h416a16 16 0 0 0 16-16V48a16 16 0 0 0-16-16z"/>
<rect x="707.73" y="434.70" width="51.7" height="11.5" rx="1.1" fill="#fff" stroke="#939393" stroke-width="0.62"/>
<rect x="768.40" y="380.20" width="52.70" height="52.40" rx="1.3" fill="#fff" stroke="#e4e4e4" stroke-width="0.7"/>
<rect x="785.60" y="393.10" width="18.3" height="27" fill="#647c6c"/>
<path transform="translate(773.80 421.80) scale(0.01621 0.01621)" fill="#3c3c3c" stroke="#3c3c3c" stroke-width="34" stroke-linejoin="round" d="M497.9 142.1l-46.1 46.1c-4.7 4.7-12.3 4.7-17 0l-111-111c-4.7-4.7-4.7-12.3 0-17l46.1-46.1c18.700-18.700 49.100-18.700 67.900 0l60.100 60.100c18.800 18.700 18.800 49.100 0 67.900zM284.200 99.800L21.600 362.400.400 483.900c-2.900 16.400 11.400 30.600 27.800 27.800l121.500-21.300 262.600-262.600c4.700-4.700 4.700-12.300 0-17l-111-111c-4.800-4.700-12.400-4.700-17.100 0zM124.100 339.900c-5.500-5.500-5.500-14.300 0-19.800l154-154c5.500-5.500 14.300-5.500 19.800 0s5.500 14.300 0 19.800l-154 154c-5.500 5.500-14.300 5.500-19.800 0zM88 424h48v36.300l-64.500 11.300-31.100-31.100L51.700 376H88v48z"/>
<path transform="translate(808.40 421.80) scale(0.01607 0.01621)" fill="#3c3c3c" stroke="#3c3c3c" stroke-width="14" stroke-linejoin="round" d="M32 464a48 48 0 0 0 48 48h288a48 48 0 0 0 48-48V128H32zm272-256a16 16 0 0 1 32 0v224a16 16 0 0 1-32 0zm-96 0a16 16 0 0 1 32 0v224a16 16 0 0 1-32 0zm-96 0a16 16 0 0 1 32 0v224a16 16 0 0 1-32 0zM432 32H312l-9.400-18.700A24 24 0 0 0 281.100 0H166.800a23.720 23.720 0 0 0-21.400 13.300L136 32H16A16 16 0 0 0 0 48v32a16 16 0 0 0 16 16h416a16 16 0 0 0 16-16V48a16 16 0 0 0-16-16z"/>
<rect x="768.90" y="434.70" width="51.7" height="11.5" rx="1.1" fill="#fff" stroke="#939393" stroke-width="0.62"/>
<rect x="829.57" y="380.20" width="52.70" height="52.40" rx="1.3" fill="#fff" stroke="#e4e4e4" stroke-width="0.7"/>
<rect x="842.42" y="393.10" width="27" height="27" fill="#84988c"/>
<path transform="translate(834.97 421.80) scale(0.01621 0.01621)" fill="#3c3c3c" stroke="#3c3c3c" stroke-width="34" stroke-linejoin="round" d="M497.9 142.1l-46.1 46.1c-4.7 4.7-12.3 4.7-17 0l-111-111c-4.7-4.7-4.7-12.3 0-17l46.1-46.1c18.700-18.700 49.100-18.700 67.900 0l60.100 60.100c18.800 18.700 18.800 49.100 0 67.900zM284.200 99.800L21.600 362.400.400 483.900c-2.900 16.400 11.400 30.600 27.800 27.800l121.500-21.300 262.600-262.600c4.700-4.700 4.700-12.300 0-17l-111-111c-4.800-4.700-12.400-4.700-17.100 0zM124.100 339.900c-5.500-5.500-5.500-14.300 0-19.800l154-154c5.500-5.500 14.300-5.500 19.800 0s5.500 14.300 0 19.800l-154 154c-5.500 5.500-14.300 5.500-19.800 0zM88 424h48v36.300l-64.500 11.300-31.100-31.100L51.700 376H88v48z"/>
<path transform="translate(869.57 421.80) scale(0.01607 0.01621)" fill="#3c3c3c" stroke="#3c3c3c" stroke-width="14" stroke-linejoin="round" d="M32 464a48 48 0 0 0 48 48h288a48 48 0 0 0 48-48V128H32zm272-256a16 16 0 0 1 32 0v224a16 16 0 0 1-32 0zm-96 0a16 16 0 0 1 32 0v224a16 16 0 0 1-32 0zm-96 0a16 16 0 0 1 32 0v224a16 16 0 0 1-32 0zM432 32H312l-9.400-18.700A24 24 0 0 0 281.100 0H166.800a23.720 23.720 0 0 0-21.400 13.300L136 32H16A16 16 0 0 0 0 48v32a16 16 0 0 0 16 16h416a16 16 0 0 0 16-16V48a16 16 0 0 0-16-16z"/>
<rect x="830.07" y="434.70" width="51.7" height="11.5" rx="1.1" fill="#fff" stroke="#939393" stroke-width="0.62"/>
<rect x="890.74" y="380.20" width="52.70" height="52.40" rx="1.3" fill="#fff" stroke="#e4e4e4" stroke-width="0.7"/>
<rect x="903.59" y="393.10" width="27" height="27" fill="url(#g8)"/>
<path transform="translate(896.14 421.80) scale(0.01621 0.01621)" fill="#3c3c3c" stroke="#3c3c3c" stroke-width="34" stroke-linejoin="round" d="M497.9 142.1l-46.1 46.1c-4.7 4.7-12.3 4.7-17 0l-111-111c-4.7-4.7-4.7-12.3 0-17l46.1-46.1c18.700-18.700 49.100-18.700 67.900 0l60.100 60.100c18.800 18.700 18.800 49.100 0 67.900zM284.200 99.800L21.600 362.400.400 483.900c-2.900 16.400 11.400 30.600 27.800 27.800l121.500-21.300 262.600-262.600c4.700-4.700 4.700-12.300 0-17l-111-111c-4.800-4.700-12.400-4.700-17.100 0zM124.100 339.900c-5.500-5.500-5.500-14.300 0-19.800l154-154c5.500-5.500 14.300-5.500 19.800 0s5.500 14.300 0 19.800l-154 154c-5.500 5.500-14.300 5.500-19.800 0zM88 424h48v36.300l-64.500 11.300-31.100-31.100L51.700 376H88v48z"/>
<path transform="translate(930.74 421.80) scale(0.01607 0.01621)" fill="#3c3c3c" stroke="#3c3c3c" stroke-width="14" stroke-linejoin="round" d="M32 464a48 48 0 0 0 48 48h288a48 48 0 0 0 48-48V128H32zm272-256a16 16 0 0 1 32 0v224a16 16 0 0 1-32 0zm-96 0a16 16 0 0 1 32 0v224a16 16 0 0 1-32 0zm-96 0a16 16 0 0 1 32 0v224a16 16 0 0 1-32 0zM432 32H312l-9.400-18.700A24 24 0 0 0 281.100 0H166.800a23.720 23.720 0 0 0-21.400 13.300L136 32H16A16 16 0 0 0 0 48v32a16 16 0 0 0 16 16h416a16 16 0 0 0 16-16V48a16 16 0 0 0-16-16z"/>
<rect x="891.24" y="434.70" width="51.7" height="11.5" rx="1.1" fill="#fff" stroke="#939393" stroke-width="0.62"/>
<path transform="translate(169.55 184.30)" d="M14 1l3 4 -2 4 4 3M17 5l5 -3M15 9l-5 4 -3 7M10 13l6 5 3 7M19 12l5 2" fill="none" stroke="#e3e3e3" stroke-width="0.6"/>
<path transform="translate(217.90 75.60) scale(0.01496 0.01465)" fill="#333" stroke="#333" stroke-width="12" stroke-linejoin="round" d="M32 464a48 48 0 0 0 48 48h288a48 48 0 0 0 48-48V128H32zm272-256a16 16 0 0 1 32 0v224a16 16 0 0 1-32 0zm-96 0a16 16 0 0 1 32 0v224a16 16 0 0 1-32 0zm-96 0a16 16 0 0 1 32 0v224a16 16 0 0 1-32 0zM432 32H312l-9.400-18.700A24 24 0 0 0 281.100 0H166.800a23.720 23.720 0 0 0-21.400 13.300L136 32H16A16 16 0 0 0 0 48v32a16 16 0 0 0 16 16h416a16 16 0 0 0 16-16V48a16 16 0 0 0-16-16z"/>
<path transform="translate(227.40 75.60) scale(0.01484 0.01484)" fill="#333" stroke="#333" stroke-width="30" stroke-linejoin="round" d="M497.9 142.1l-46.1 46.1c-4.7 4.7-12.3 4.7-17 0l-111-111c-4.7-4.7-4.7-12.3 0-17l46.1-46.1c18.700-18.700 49.100-18.700 67.900 0l60.100 60.100c18.800 18.700 18.800 49.100 0 67.900zM284.200 99.800L21.600 362.400.400 483.900c-2.900 16.400 11.400 30.600 27.800 27.800l121.500-21.300 262.600-262.600c4.700-4.700 4.700-12.300 0-17l-111-111c-4.800-4.700-12.400-4.700-17.100 0zM124.100 339.900c-5.500-5.500-5.500-14.300 0-19.800l154-154c5.500-5.500 14.300-5.500 19.800 0s5.500 14.300 0 19.800l-154 154c-5.500 5.500-14.300 5.500-19.800 0zM88 424h48v36.300l-64.500 11.300-31.100-31.100L51.700 376H88v48z"/>
<path d="M4.4 6.5V13.7a1.3 1.3 0 0 0 1.3 1.3H14.1" fill="none" stroke="#3a3a3a" stroke-width="1.25" stroke-linecap="round"/>
<g fill="#3a3a3a"><rect x="6.15" y="10.8" width="1.5" height="2.2" rx=".3"/><rect x="8.3" y="8.6" width="1.5" height="4.4" rx=".3"/><rect x="10.5" y="9.9" width="1.5" height="3.1" rx=".3"/><rect x="12.6" y="7.5" width="1.5" height="5.5" rx=".3"/></g>
<path transform="translate(3.70 28.44) scale(0.02109 0.02366)" fill="#3a3a3a" stroke="#3a3a3a" stroke-width="10" stroke-linejoin="round" d="M96 224c35.300 0 64-28.700 64-64s-28.700-64-64-64-64 28.700-64 64 28.700 64 64 64zm448 0c35.300 0 64-28.700 64-64s-28.700-64-64-64-64 28.700-64 64 28.700 64 64 64zm32 32h-64c-17.600 0-33.500 7.100-45.100 18.600 40.300 22.100 68.900 62 75.100 109.400h66c17.700 0 32-14.300 32-32v-32c0-35.300-28.700-64-64-64zm-256 0c61.900 0 112-50.100 112-112S381.900 32 320 32 208 82.100 208 144s50.100 112 112 112zm76.800 32h-8.300c-20.800 10-43.900 16-68.500 16s-47.600-6-68.500-16h-8.300C179.600 288 128 339.600 128 403.200V432c0 26.500 21.500 48 48 48h288c26.500 0 48-21.500 48-48v-28.800c0-63.600-51.600-115.200-115.200-115.200zm-223.700-13.400C161.500 263.100 145.600 256 128 256H64c-35.300 0-64 28.700-64 64v32c0 17.700 14.300 32 32 32h65.900c6.300-47.400 34.900-87.300 75.200-109.400z"/>
<path transform="translate(3.70 52.60) scale(0.02118 0.02129)" fill="#3a3a3a" stroke="#3a3a3a" stroke-width="8" stroke-linejoin="round" d="M528.120 301.319l47.273-208C578.806 78.301 567.391 64 551.990 64H159.208l-9.166-44.810C147.758 8.021 137.930 0 126.529 0H24C10.745 0 0 10.745 0 24v16c0 13.255 10.745 24 24 24h69.883l70.248 343.435C147.325 417.100 136 435.222 136 456c0 30.928 25.072 56 56 56s56-25.072 56-56c0-15.674-6.447-29.835-16.824-40h209.647C430.447 426.165 424 440.326 424 456c0 30.928 25.072 56 56 56s56-25.072 56-56c0-22.172-12.888-41.332-31.579-50.405l5.517-24.276c3.413-15.018-8.002-29.319-23.403-29.319H218.117l-6.545-32h293.145c11.206 0 20.920-7.754 23.403-18.681z"/>
<path transform="translate(3.40 76.40) scale(0.02168 0.02109)" fill="#3a3a3a" stroke="#3a3a3a" stroke-width="20" stroke-linejoin="round" d="M497.9 142.1l-46.1 46.1c-4.7 4.7-12.3 4.7-17 0l-111-111c-4.7-4.7-4.7-12.3 0-17l46.1-46.1c18.700-18.700 49.100-18.700 67.900 0l60.100 60.100c18.800 18.700 18.800 49.100 0 67.900zM284.200 99.800L21.600 362.400.400 483.900c-2.900 16.400 11.400 30.600 27.800 27.800l121.500-21.300 262.600-262.600c4.700-4.700 4.700-12.300 0-17l-111-111c-4.800-4.700-12.400-4.700-17.100 0zM124.100 339.900c-5.500-5.500-5.500-14.300 0-19.800l154-154c5.500-5.500 14.300-5.500 19.800 0s5.500 14.300 0 19.800l-154 154c-5.500 5.500-14.300 5.500-19.800 0zM88 424h48v36.300l-64.500 11.300-31.100-31.100L51.700 376H88v48z"/>
</svg>
<div class="txt">
<div class="abs h1" style="left:156.6px;top:22.9px">Beeldbank</div>
<div class="abs h2" style="left:156.6px;top:73.1px">Achtergrond</div>
<div class="inp" style="left:159.20px;top:156.80px">bruin zand achtergrond</div>
<div class="inp" style="left:220.37px;top:156.80px">taupe bruin zand</div>
<div class="inp" style="left:281.54px;top:156.80px">taupe bruin achtergrond</div>
<div class="inp" style="left:342.71px;top:156.80px">roest terra achtergrond</div>
<div class="inp" style="left:403.88px;top:156.80px">terra roest achtergrond</div>
<div class="inp" style="left:465.05px;top:156.80px">taupe velours</div>
<div class="inp" style="left:526.22px;top:156.80px">oker velours geel</div>
<div class="inp" style="left:587.39px;top:156.80px">kraft karton papier</div>
<div class="inp" style="left:648.56px;top:156.80px">kraft karton papier</div>
<div class="inp" style="left:709.73px;top:156.80px">kraft karton papier</div>
<div class="inp" style="left:770.90px;top:156.80px">kraft karton papier</div>
<div class="inp" style="left:832.07px;top:156.80px">papier achtergrond</div>
<div class="inp" style="left:893.24px;top:156.80px">papier achtergrond</div>
<div class="inp" style="left:159.20px;top:226.40px">marmer achtergrond</div>
<div class="inp" style="left:220.37px;top:226.40px">papier achtergrond</div>
<div class="inp" style="left:281.54px;top:226.40px">papier achtergrond</div>
<div class="inp" style="left:342.71px;top:226.40px">papier achtergrond</div>
<div class="inp" style="left:403.88px;top:226.40px">papier achtergrond</div>
<div class="inp" style="left:465.05px;top:226.40px">roze achtergrond</div>
<div class="inp" style="left:526.22px;top:226.40px">roze velours vilt</div>
<div class="inp" style="left:587.39px;top:226.40px">donkerrood achtergrond</div>
<div class="inp" style="left:648.56px;top:226.40px">donkerrood achtergrond</div>
<div class="inp" style="left:709.73px;top:226.40px">terra rood roest</div>
<div class="inp" style="left:770.90px;top:226.40px">terra rood roest</div>
<div class="inp" style="left:832.07px;top:226.40px">terra rood roest</div>
<div class="inp" style="left:893.24px;top:226.40px">terra rood roest</div>
<div class="inp" style="left:159.20px;top:296.00px">peach zalm  achtergrond</div>
<div class="inp" style="left:220.37px;top:296.00px">oudroze achtergrond</div>
<div class="inp" style="left:281.54px;top:296.00px">oudroze achtergrond</div>
<div class="inp" style="left:342.71px;top:296.00px">oudroze achtergrond</div>
<div class="inp" style="left:403.88px;top:296.00px">roze achtergrond</div>
<div class="inp" style="left:465.05px;top:296.00px">lichtroze achtergrond</div>
<div class="inp" style="left:526.22px;top:296.00px">lichtroze oudroze</div>
<div class="inp" style="left:587.39px;top:296.00px">peach  achtergrond</div>
<div class="inp" style="left:648.56px;top:296.00px">peach lichtroze</div>
<div class="inp" style="left:709.73px;top:296.00px">lichtroze</div>
<div class="inp" style="left:770.90px;top:296.00px">oudroze lich achtergrond</div>
<div class="inp" style="left:832.07px;top:296.00px">lichtroze waterverf</div>
<div class="inp" style="left:893.24px;top:296.00px">oudroze taupe</div>
<div class="inp" style="left:159.20px;top:365.60px">roest terra achtergrond</div>
<div class="inp" style="left:220.37px;top:365.60px">oudroze velvet</div>
<div class="inp" style="left:281.54px;top:365.60px">lila roze paars</div>
<div class="inp" style="left:342.71px;top:365.60px">donkerblauw</div>
<div class="inp" style="left:403.88px;top:365.60px">donkerblauw</div>
<div class="inp" style="left:465.05px;top:365.60px">donkerblauw</div>
<div class="inp" style="left:526.22px;top:365.60px">donkerblauw</div>
<div class="inp" style="left:587.39px;top:365.60px">donkerblauw</div>
<div class="inp" style="left:648.56px;top:365.60px">donkerblauw</div>
<div class="inp" style="left:709.73px;top:365.60px">donkerblauw</div>
<div class="inp" style="left:770.90px;top:365.60px">donkerblauw</div>
<div class="inp" style="left:832.07px;top:365.60px">blauw</div>
<div class="inp" style="left:893.24px;top:365.60px">grijs blauw</div>
<div class="inp" style="left:159.20px;top:435.20px">groen</div>
<div class="inp" style="left:220.37px;top:435.20px">donkergroen</div>
<div class="inp" style="left:281.54px;top:435.20px">donkergroen</div>
<div class="inp" style="left:342.71px;top:435.20px">donkergroen</div>
<div class="inp" style="left:403.88px;top:435.20px">donkergroen</div>
<div class="inp" style="left:465.05px;top:435.20px">grijs groen</div>
<div class="inp" style="left:526.22px;top:435.20px">grijs</div>
<div class="inp" style="left:587.39px;top:435.20px">lichtgroen</div>
<div class="inp" style="left:648.56px;top:435.20px">olijf groen</div>
<div class="inp" style="left:709.73px;top:435.20px">olijf groen</div>
<div class="inp" style="left:770.90px;top:435.20px">groen</div>
<div class="inp" style="left:832.07px;top:435.20px">groen</div>
<div class="inp" style="left:893.24px;top:435.20px">groen</div>
<div class="nav" style="left:22.7px;top:6.75px">Statistieken</div>
<div class="nav" style="left:25.4px;top:29.75px">Gebruikers</div>
<div class="nav" style="left:23.9px;top:53.75px">E-commerce</div>
<div class="nav" style="left:22.7px;top:76.75px">Content</div>
<div class="nav" style="left:24.1px;top:100.75px">Pagina's</div>
<div class="nav" style="left:24.1px;top:123.75px">Categorieën</div>
<div class="nav" style="left:24.1px;top:147.75px">Kaarten bewerken</div>
<div class="nav" style="left:24.1px;top:170.75px">Designbeheer</div>
<div class="nav" style="left:24.1px;top:194.75px">Rail configuratie</div>
<div class="nav" style="left:24.1px;top:217.75px">Producten bewerken</div>
<div class="nav" style="left:24.1px;top:241.75px">Producttypen</div>
<div class="nav" style="left:24.1px;top:264.75px">Freeform bewerken</div>
<div class="nav" style="left:24.1px;top:288.75px">Beeldcategorieën Freeform</div>
<div class="nav" style="left:24.1px;top:295.75px">Productgroepen</div>
<div class="nav" style="left:24.1px;top:319.75px">Product Enveloppen</div>
<div class="nav" style="left:24.1px;top:342.75px">Tags</div>
<div class="nav" style="left:24.1px;top:366.75px">Beeldbank</div>
<div class="nav" style="left:24.1px;top:389.75px">Cookiepagina</div>
</div>
<svg class="abs" style="left:0;top:0" width="1024" height="408" viewBox="0 0 1024 408">
<rect x="155.6" y="152.5" width="55.2" height="19.8" fill="none" stroke="#21dd2b" stroke-width="3"/>
<line x1="128.4" y1="371.5" x2="153.25" y2="187" stroke="#21dd2b" stroke-width="3"/>
<polygon points="154.8,174.3 146.4,186.2 159.9,187.9" fill="#21dd2b"/>
</svg>
</body></html>
